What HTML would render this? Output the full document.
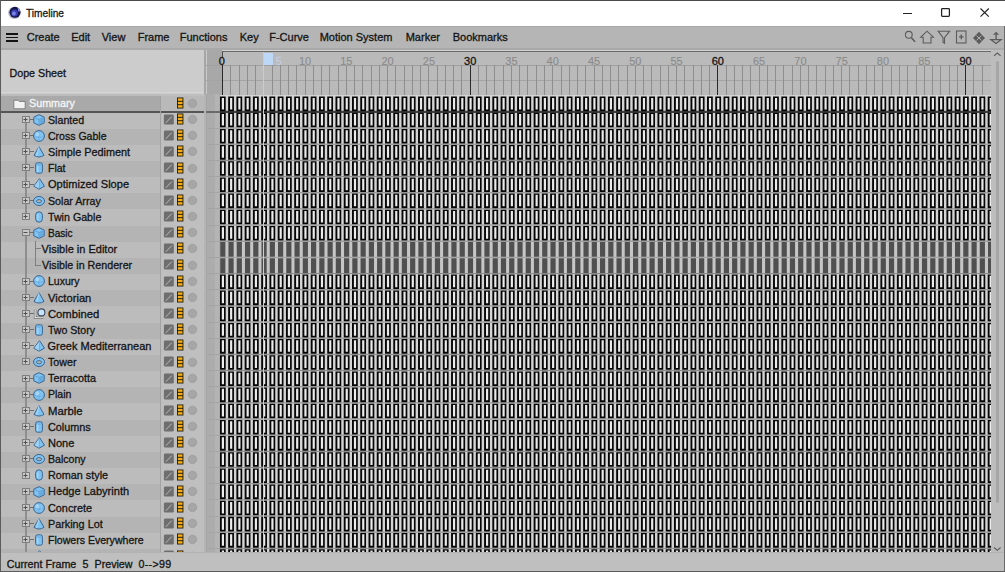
<!DOCTYPE html>
<html><head><meta charset="utf-8"><title>Timeline</title>
<style>
html,body{margin:0;padding:0;}
body{width:1005px;height:572px;overflow:hidden;position:relative;background:#c0c0c0;font-family:"Liberation Sans", sans-serif;}
body>div{position:absolute;}
.t{white-space:pre;line-height:14px;-webkit-text-stroke:0.3px;}
</style></head><body>
<div style="left:0px;top:0px;width:1005px;height:26px;background:#ffffff;"></div><div style="left:0px;top:0px;width:1005px;height:1px;background:#4a4a4a;"></div><svg style="position:absolute;left:8px;top:6px" width="14" height="14" viewBox="0 0 14 14"><circle cx="6.4" cy="6.9" r="6.2" fill="#b8b8c8"/><circle cx="7.0" cy="6.3" r="5.5" fill="#15154e"/><circle cx="6.6" cy="6.9" r="3.4" fill="#3840b0"/><circle cx="5.9" cy="7.5" r="1.9" fill="#7a82ea"/><path d="M9.6 1.6A5.6 5.6 0 0 1 12.2 5.2L10.4 5.6Z" fill="#9aa2f4"/></svg><div class="t" style="left:26px;top:5.89px;font-size:10.7px;color:#1a1a1a;transform:scaleX(0.95);transform-origin:0 0">Timeline</div><div style="left:903px;top:12.5px;width:8.5px;height:1.3px;background:#222;"></div><svg style="position:absolute;left:940px;top:7px" width="11" height="11" viewBox="0 0 11 11"><rect x="1.6" y="1.5" width="7.8" height="7.8" rx="0.8" fill="none" stroke="#222" stroke-width="1.25"/></svg><svg style="position:absolute;left:979px;top:7px" width="11" height="11" viewBox="0 0 11 11"><path d="M1.5 1.5L9.8 9.6M9.8 1.5L1.5 9.6" stroke="#222" stroke-width="1.15"/></svg><div style="left:0px;top:26px;width:1005px;height:22px;background:#b5b5b5;"></div><div style="left:0px;top:26px;width:1005px;height:1.2px;background:#a9a9a9;"></div><div style="left:0px;top:48px;width:1005px;height:2px;background:#a9a9a9;"></div><div style="left:6px;top:33.1px;width:12px;height:1.8px;background:#141414;"></div><div style="left:6px;top:36.5px;width:12px;height:1.8px;background:#141414;"></div><div style="left:6px;top:40.0px;width:12px;height:1.8px;background:#141414;"></div><div class="t" style="left:26.7px;top:30.19px;font-size:11px;color:#141414;">Create</div><div class="t" style="left:71.2px;top:30.19px;font-size:11px;color:#141414;">Edit</div><div class="t" style="left:101.7px;top:30.19px;font-size:11px;color:#141414;">View</div><div class="t" style="left:137.7px;top:30.19px;font-size:11px;color:#141414;">Frame</div><div class="t" style="left:179.7px;top:30.19px;font-size:11px;color:#141414;">Functions</div><div class="t" style="left:239.7px;top:30.19px;font-size:11px;color:#141414;">Key</div><div class="t" style="left:269.2px;top:30.19px;font-size:11px;color:#141414;">F-Curve</div><div class="t" style="left:319.7px;top:30.19px;font-size:11px;color:#141414;">Motion System</div><div class="t" style="left:405.7px;top:30.19px;font-size:11px;color:#141414;">Marker</div><div class="t" style="left:452.7px;top:30.19px;font-size:11px;color:#141414;">Bookmarks</div><svg style="position:absolute;left:900px;top:26px" width="105" height="22" viewBox="0 0 105 22"><g fill="none" stroke="#5c5c5c" stroke-width="1.1">
<circle cx="8.8" cy="8.8" r="3.4"/><path d="M11.3 11.5L15 15.8" stroke-width="1.6"/>
<path d="M20.8 11.2L27 5.2L33.4 11.2H31V17H23.2V11.2Z"/>
<path d="M38.2 5.2H49.6L44.5 11.6V17.2L43 16.2V11.6Z"/>
<rect x="56.5" y="5" width="9.5" height="12"/><path d="M61.3 8.6V13.2M59 10.9H63.6" stroke-width="1.4"/>
</g><g fill="#5c5c5c">
<path d="M79 5.8L85 12L79 18.2L73 12Z"/>
<path d="M96.1 5.8L99.2 8.8H93Z"/><rect x="95.4" y="8.5" width="1.4" height="4.8"/></g>
<path d="M90.8 13.6H101.2L96 17.6Z" fill="none" stroke="#5c5c5c" stroke-width="1.2"/>
<g stroke="#bcbcbc" stroke-width="0.9" fill="none"><path d="M76.6 9.6L81.4 14.4M81.4 9.6L76.6 14.4"/></g></svg><div style="left:1px;top:50px;width:203px;height:44px;background:#cccccc;"></div><div style="left:1px;top:92px;width:203px;height:1px;background:#d5d5d5;"></div><div style="left:1px;top:94px;width:203px;height:1px;background:#8c8c8c;"></div><div style="left:1px;top:95px;width:203px;height:1px;background:#c0c0c0;"></div><div class="t" style="left:9.5px;top:66.09px;font-size:10.7px;color:#141414;">Dope Sheet</div><div style="left:204px;top:50px;width:2px;height:44px;background:#a6a6a6;"></div><div style="left:206px;top:50px;width:1px;height:44px;background:#cacaca;"></div><div style="left:207px;top:50px;width:15px;height:44px;background:#a8a8a8;"></div><div style="left:204px;top:94px;width:2px;height:458px;background:#b4b4b4;"></div><div style="left:206px;top:94px;width:1px;height:458px;background:#a6a6a6;"></div><div style="left:207px;top:94px;width:15px;height:458px;background:#acacac;"></div><div style="left:215px;top:94px;width:4px;height:458px;background:#b4b4b4;"></div><div style="left:222px;top:50px;width:769px;height:45px;background:#bababa;"></div><div style="left:222px;top:50px;width:769px;height:1px;background:#d2d2d2;"></div><div style="left:222px;top:51px;width:769px;height:1px;background:#6a6a6a;"></div><div style="left:206px;top:64.6px;width:785px;height:1.6px;background:#a0a0a0;"></div><div style="left:206px;top:80px;width:785px;height:1px;background:#a4a4a4;"></div><div style="left:222px;top:51px;width:1px;height:6px;background:#505050;"></div><div style="left:222px;top:65px;width:1px;height:30px;background:#484848;"></div><div style="left:222.00px;top:65px;width:1px;height:30px;background:#2a2a2a"></div><div style="left:230.26px;top:65px;width:1px;height:30px;background:#8e8e8e"></div><div style="left:238.51px;top:65px;width:1px;height:30px;background:#8e8e8e"></div><div style="left:246.77px;top:65px;width:1px;height:30px;background:#8e8e8e"></div><div style="left:255.02px;top:65px;width:1px;height:30px;background:#8e8e8e"></div><div style="left:263.28px;top:65px;width:1px;height:30px;background:#8e8e8e"></div><div style="left:271.54px;top:65px;width:1px;height:30px;background:#8e8e8e"></div><div style="left:279.79px;top:65px;width:1px;height:30px;background:#8e8e8e"></div><div style="left:288.05px;top:65px;width:1px;height:30px;background:#8e8e8e"></div><div style="left:296.30px;top:65px;width:1px;height:30px;background:#8e8e8e"></div><div style="left:304.56px;top:65px;width:1px;height:30px;background:#8e8e8e"></div><div style="left:312.82px;top:65px;width:1px;height:30px;background:#8e8e8e"></div><div style="left:321.07px;top:65px;width:1px;height:30px;background:#8e8e8e"></div><div style="left:329.33px;top:65px;width:1px;height:30px;background:#8e8e8e"></div><div style="left:337.58px;top:65px;width:1px;height:30px;background:#8e8e8e"></div><div style="left:345.84px;top:65px;width:1px;height:30px;background:#8e8e8e"></div><div style="left:354.10px;top:65px;width:1px;height:30px;background:#8e8e8e"></div><div style="left:362.35px;top:65px;width:1px;height:30px;background:#8e8e8e"></div><div style="left:370.61px;top:65px;width:1px;height:30px;background:#8e8e8e"></div><div style="left:378.86px;top:65px;width:1px;height:30px;background:#8e8e8e"></div><div style="left:387.12px;top:65px;width:1px;height:30px;background:#8e8e8e"></div><div style="left:395.38px;top:65px;width:1px;height:30px;background:#8e8e8e"></div><div style="left:403.63px;top:65px;width:1px;height:30px;background:#8e8e8e"></div><div style="left:411.89px;top:65px;width:1px;height:30px;background:#8e8e8e"></div><div style="left:420.14px;top:65px;width:1px;height:30px;background:#8e8e8e"></div><div style="left:428.40px;top:65px;width:1px;height:30px;background:#8e8e8e"></div><div style="left:436.66px;top:65px;width:1px;height:30px;background:#8e8e8e"></div><div style="left:444.91px;top:65px;width:1px;height:30px;background:#8e8e8e"></div><div style="left:453.17px;top:65px;width:1px;height:30px;background:#8e8e8e"></div><div style="left:461.42px;top:65px;width:1px;height:30px;background:#8e8e8e"></div><div style="left:469.68px;top:65px;width:1px;height:30px;background:#2a2a2a"></div><div style="left:477.94px;top:65px;width:1px;height:30px;background:#8e8e8e"></div><div style="left:486.19px;top:65px;width:1px;height:30px;background:#8e8e8e"></div><div style="left:494.45px;top:65px;width:1px;height:30px;background:#8e8e8e"></div><div style="left:502.70px;top:65px;width:1px;height:30px;background:#8e8e8e"></div><div style="left:510.96px;top:65px;width:1px;height:30px;background:#8e8e8e"></div><div style="left:519.22px;top:65px;width:1px;height:30px;background:#8e8e8e"></div><div style="left:527.47px;top:65px;width:1px;height:30px;background:#8e8e8e"></div><div style="left:535.73px;top:65px;width:1px;height:30px;background:#8e8e8e"></div><div style="left:543.98px;top:65px;width:1px;height:30px;background:#8e8e8e"></div><div style="left:552.24px;top:65px;width:1px;height:30px;background:#8e8e8e"></div><div style="left:560.50px;top:65px;width:1px;height:30px;background:#8e8e8e"></div><div style="left:568.75px;top:65px;width:1px;height:30px;background:#8e8e8e"></div><div style="left:577.01px;top:65px;width:1px;height:30px;background:#8e8e8e"></div><div style="left:585.26px;top:65px;width:1px;height:30px;background:#8e8e8e"></div><div style="left:593.52px;top:65px;width:1px;height:30px;background:#8e8e8e"></div><div style="left:601.78px;top:65px;width:1px;height:30px;background:#8e8e8e"></div><div style="left:610.03px;top:65px;width:1px;height:30px;background:#8e8e8e"></div><div style="left:618.29px;top:65px;width:1px;height:30px;background:#8e8e8e"></div><div style="left:626.54px;top:65px;width:1px;height:30px;background:#8e8e8e"></div><div style="left:634.80px;top:65px;width:1px;height:30px;background:#8e8e8e"></div><div style="left:643.06px;top:65px;width:1px;height:30px;background:#8e8e8e"></div><div style="left:651.31px;top:65px;width:1px;height:30px;background:#8e8e8e"></div><div style="left:659.57px;top:65px;width:1px;height:30px;background:#8e8e8e"></div><div style="left:667.82px;top:65px;width:1px;height:30px;background:#8e8e8e"></div><div style="left:676.08px;top:65px;width:1px;height:30px;background:#8e8e8e"></div><div style="left:684.34px;top:65px;width:1px;height:30px;background:#8e8e8e"></div><div style="left:692.59px;top:65px;width:1px;height:30px;background:#8e8e8e"></div><div style="left:700.85px;top:65px;width:1px;height:30px;background:#8e8e8e"></div><div style="left:709.10px;top:65px;width:1px;height:30px;background:#8e8e8e"></div><div style="left:717.36px;top:65px;width:1px;height:30px;background:#2a2a2a"></div><div style="left:725.62px;top:65px;width:1px;height:30px;background:#8e8e8e"></div><div style="left:733.87px;top:65px;width:1px;height:30px;background:#8e8e8e"></div><div style="left:742.13px;top:65px;width:1px;height:30px;background:#8e8e8e"></div><div style="left:750.38px;top:65px;width:1px;height:30px;background:#8e8e8e"></div><div style="left:758.64px;top:65px;width:1px;height:30px;background:#8e8e8e"></div><div style="left:766.90px;top:65px;width:1px;height:30px;background:#8e8e8e"></div><div style="left:775.15px;top:65px;width:1px;height:30px;background:#8e8e8e"></div><div style="left:783.41px;top:65px;width:1px;height:30px;background:#8e8e8e"></div><div style="left:791.66px;top:65px;width:1px;height:30px;background:#8e8e8e"></div><div style="left:799.92px;top:65px;width:1px;height:30px;background:#8e8e8e"></div><div style="left:808.18px;top:65px;width:1px;height:30px;background:#8e8e8e"></div><div style="left:816.43px;top:65px;width:1px;height:30px;background:#8e8e8e"></div><div style="left:824.69px;top:65px;width:1px;height:30px;background:#8e8e8e"></div><div style="left:832.94px;top:65px;width:1px;height:30px;background:#8e8e8e"></div><div style="left:841.20px;top:65px;width:1px;height:30px;background:#8e8e8e"></div><div style="left:849.46px;top:65px;width:1px;height:30px;background:#8e8e8e"></div><div style="left:857.71px;top:65px;width:1px;height:30px;background:#8e8e8e"></div><div style="left:865.97px;top:65px;width:1px;height:30px;background:#8e8e8e"></div><div style="left:874.22px;top:65px;width:1px;height:30px;background:#8e8e8e"></div><div style="left:882.48px;top:65px;width:1px;height:30px;background:#8e8e8e"></div><div style="left:890.74px;top:65px;width:1px;height:30px;background:#8e8e8e"></div><div style="left:898.99px;top:65px;width:1px;height:30px;background:#8e8e8e"></div><div style="left:907.25px;top:65px;width:1px;height:30px;background:#8e8e8e"></div><div style="left:915.50px;top:65px;width:1px;height:30px;background:#8e8e8e"></div><div style="left:923.76px;top:65px;width:1px;height:30px;background:#8e8e8e"></div><div style="left:932.02px;top:65px;width:1px;height:30px;background:#8e8e8e"></div><div style="left:940.27px;top:65px;width:1px;height:30px;background:#8e8e8e"></div><div style="left:948.53px;top:65px;width:1px;height:30px;background:#8e8e8e"></div><div style="left:956.78px;top:65px;width:1px;height:30px;background:#8e8e8e"></div><div style="left:965.04px;top:65px;width:1px;height:30px;background:#2a2a2a"></div><div style="left:973.30px;top:65px;width:1px;height:30px;background:#8e8e8e"></div><div style="left:981.55px;top:65px;width:1px;height:30px;background:#8e8e8e"></div><div class="t" style="left:181.80px;width:80px;text-align:center;top:53.99px;font-size:11px;color:#141414;">0</div><div class="t" style="left:275.5px;top:53.99px;font-size:11px;color:#c4cde0;">5</div><div class="t" style="left:265.06px;width:80px;text-align:center;top:53.99px;font-size:11px;color:#8a8a8a;-webkit-text-stroke:0.1px">10</div><div class="t" style="left:306.34px;width:80px;text-align:center;top:53.99px;font-size:11px;color:#8a8a8a;-webkit-text-stroke:0.1px">15</div><div class="t" style="left:347.62px;width:80px;text-align:center;top:53.99px;font-size:11px;color:#8a8a8a;-webkit-text-stroke:0.1px">20</div><div class="t" style="left:388.90px;width:80px;text-align:center;top:53.99px;font-size:11px;color:#8a8a8a;-webkit-text-stroke:0.1px">25</div><div class="t" style="left:430.18px;width:80px;text-align:center;top:53.99px;font-size:11px;color:#141414;">30</div><div class="t" style="left:471.46px;width:80px;text-align:center;top:53.99px;font-size:11px;color:#8a8a8a;-webkit-text-stroke:0.1px">35</div><div class="t" style="left:512.74px;width:80px;text-align:center;top:53.99px;font-size:11px;color:#8a8a8a;-webkit-text-stroke:0.1px">40</div><div class="t" style="left:554.02px;width:80px;text-align:center;top:53.99px;font-size:11px;color:#8a8a8a;-webkit-text-stroke:0.1px">45</div><div class="t" style="left:595.30px;width:80px;text-align:center;top:53.99px;font-size:11px;color:#8a8a8a;-webkit-text-stroke:0.1px">50</div><div class="t" style="left:636.58px;width:80px;text-align:center;top:53.99px;font-size:11px;color:#8a8a8a;-webkit-text-stroke:0.1px">55</div><div class="t" style="left:677.86px;width:80px;text-align:center;top:53.99px;font-size:11px;color:#141414;">60</div><div class="t" style="left:719.14px;width:80px;text-align:center;top:53.99px;font-size:11px;color:#8a8a8a;-webkit-text-stroke:0.1px">65</div><div class="t" style="left:760.42px;width:80px;text-align:center;top:53.99px;font-size:11px;color:#8a8a8a;-webkit-text-stroke:0.1px">70</div><div class="t" style="left:801.70px;width:80px;text-align:center;top:53.99px;font-size:11px;color:#8a8a8a;-webkit-text-stroke:0.1px">75</div><div class="t" style="left:842.98px;width:80px;text-align:center;top:53.99px;font-size:11px;color:#8a8a8a;-webkit-text-stroke:0.1px">80</div><div class="t" style="left:884.26px;width:80px;text-align:center;top:53.99px;font-size:11px;color:#8a8a8a;-webkit-text-stroke:0.1px">85</div><div class="t" style="left:925.54px;width:80px;text-align:center;top:53.99px;font-size:11px;color:#141414;">90</div><div style="left:1px;top:94px;width:203px;height:458px;background:#bcbcbc;"></div><div style="left:161px;top:94px;width:43px;height:458px;background:#bfbfbf;"></div><div style="left:1px;top:96px;width:159px;height:15.7px;background:#a9a9a9;"></div><div style="left:160px;top:96px;width:44px;height:15.7px;background:#b9b9b9;"></div><div style="left:1px;top:128.66px;width:159px;height:16.165px;background:#b4b4b4"></div><div style="left:1px;top:160.99px;width:159px;height:16.165px;background:#b4b4b4"></div><div style="left:1px;top:193.32px;width:159px;height:16.165px;background:#b4b4b4"></div><div style="left:1px;top:225.65px;width:159px;height:16.165px;background:#b4b4b4"></div><div style="left:1px;top:257.98px;width:159px;height:16.165px;background:#b4b4b4"></div><div style="left:1px;top:290.31px;width:159px;height:16.165px;background:#b4b4b4"></div><div style="left:1px;top:322.64px;width:159px;height:16.165px;background:#b4b4b4"></div><div style="left:1px;top:354.97px;width:159px;height:16.165px;background:#b4b4b4"></div><div style="left:1px;top:387.30px;width:159px;height:16.165px;background:#b4b4b4"></div><div style="left:1px;top:419.63px;width:159px;height:16.165px;background:#b4b4b4"></div><div style="left:1px;top:451.96px;width:159px;height:16.165px;background:#b4b4b4"></div><div style="left:1px;top:484.29px;width:159px;height:16.165px;background:#b4b4b4"></div><div style="left:1px;top:516.62px;width:159px;height:16.165px;background:#b4b4b4"></div><div style="left:1px;top:548.95px;width:159px;height:16.165px;background:#b4b4b4"></div><div style="left:207px;top:127.56px;width:13px;height:1px;background:#a4a4a4"></div><div style="left:207px;top:143.72px;width:13px;height:1px;background:#a4a4a4"></div><div style="left:207px;top:159.89px;width:13px;height:1px;background:#a4a4a4"></div><div style="left:207px;top:176.06px;width:13px;height:1px;background:#a4a4a4"></div><div style="left:207px;top:192.22px;width:13px;height:1px;background:#a4a4a4"></div><div style="left:207px;top:208.38px;width:13px;height:1px;background:#a4a4a4"></div><div style="left:207px;top:224.55px;width:13px;height:1px;background:#a4a4a4"></div><div style="left:207px;top:240.71px;width:13px;height:1px;background:#a4a4a4"></div><div style="left:207px;top:256.88px;width:13px;height:1px;background:#a4a4a4"></div><div style="left:207px;top:273.05px;width:13px;height:1px;background:#a4a4a4"></div><div style="left:207px;top:289.21px;width:13px;height:1px;background:#a4a4a4"></div><div style="left:207px;top:305.38px;width:13px;height:1px;background:#a4a4a4"></div><div style="left:207px;top:321.54px;width:13px;height:1px;background:#a4a4a4"></div><div style="left:207px;top:337.70px;width:13px;height:1px;background:#a4a4a4"></div><div style="left:207px;top:353.87px;width:13px;height:1px;background:#a4a4a4"></div><div style="left:207px;top:370.04px;width:13px;height:1px;background:#a4a4a4"></div><div style="left:207px;top:386.20px;width:13px;height:1px;background:#a4a4a4"></div><div style="left:207px;top:402.37px;width:13px;height:1px;background:#a4a4a4"></div><div style="left:207px;top:418.53px;width:13px;height:1px;background:#a4a4a4"></div><div style="left:207px;top:434.69px;width:13px;height:1px;background:#a4a4a4"></div><div style="left:207px;top:450.86px;width:13px;height:1px;background:#a4a4a4"></div><div style="left:207px;top:467.02px;width:13px;height:1px;background:#a4a4a4"></div><div style="left:207px;top:483.19px;width:13px;height:1px;background:#a4a4a4"></div><div style="left:207px;top:499.36px;width:13px;height:1px;background:#a4a4a4"></div><div style="left:207px;top:515.52px;width:13px;height:1px;background:#a4a4a4"></div><div style="left:207px;top:531.68px;width:13px;height:1px;background:#a4a4a4"></div><div style="left:207px;top:547.85px;width:13px;height:1px;background:#a4a4a4"></div><div style="left:1px;top:111.20px;width:203px;height:1.4px;background:#555555"></div><div style="left:206px;top:111.20px;width:16px;height:1.4px;background:#6a6a6a"></div><div style="left:160px;top:96px;width:1px;height:456px;background:#a2a2a2;"></div><svg style="position:absolute;left:13px;top:98.00px" width="13" height="12" viewBox="0 0 13 12"><path d="M0.8 2.2H5L6.2 3.4H12.2V10.8H0.8Z" fill="#f2f2f2" stroke="#777" stroke-width="0.9"/></svg><div class="t" style="left:29px;top:95.92px;font-size:11px;color:#f6f6f6;transform:scaleX(0.976);transform-origin:0 0">Summary</div><svg style="position:absolute;left:176px;top:96.93px" width="22" height="13" viewBox="0 0 22 13"><rect x="1" y="0.5" width="6.4" height="11" fill="#1e1a10"/><rect x="1.9" y="1.4" width="4.6" height="2.4" fill="#f8ae1a"/><rect x="1.9" y="4.8" width="4.6" height="2.4" fill="#f8ae1a"/><rect x="1.9" y="8.2" width="4.6" height="2.4" fill="#f8ae1a"/><circle cx="16.5" cy="6.4" r="4.2" fill="#a6a6a6" stroke="#9c9c9c" stroke-width="0.8"/></svg><div style="left:25.4px;top:123px;width:1.2px;height:9px;background:#8e8e8e"></div><svg style="position:absolute;left:22px;top:116px" width="8" height="7" viewBox="0 0 8 7"><rect x="0.5" y="0.5" width="7" height="6" fill="#c8c8c8" stroke="#808080" stroke-width="1"/><path d="M1.5 3.5H5.5" stroke="#505050" stroke-width="1"/><path d="M3.5 1.5V5.5" stroke="#505050" stroke-width="1"/></svg><div style="left:30px;top:119px;width:4px;height:1px;background:#6e6e6e"></div><svg style="position:absolute;left:33.3px;top:113.80px" width="13" height="12" viewBox="0 0 13 12"><path d="M6 0.7L11.2 3.1V8.9L6 11.3L0.8 8.9V3.1Z" fill="#80c3f1" stroke="#3c6690" stroke-width="1"/><path d="M6 5.6V11.1M6 5.6L1.2 3.4M6 5.6L10.8 3.4" fill="none" stroke="#5d9fd6" stroke-width="0.9"/><path d="M6.5 6L10.6 3.8V8.6L6.5 10.6Z" fill="#5d9fd6" opacity="0.7"/></svg><div class="t" style="left:47.5px;top:112.68px;font-size:11px;color:#141414;transform:scaleX(0.968);transform-origin:0 0">Slanted</div><svg style="position:absolute;left:163px;top:114.00px" width="12" height="12" viewBox="0 0 12 12"><rect x="0.9" y="0.6" width="9.9" height="10" rx="1.4" fill="#6e6e6e"/><path d="M2.8 8.8L8.8 2.6" stroke="#c4c4c4" stroke-width="0.9"/></svg><svg style="position:absolute;left:176px;top:113.10px" width="22" height="13" viewBox="0 0 22 13"><rect x="1" y="0.5" width="6.4" height="11" fill="#1e1a10"/><rect x="1.9" y="1.4" width="4.6" height="2.4" fill="#f8ae1a"/><rect x="1.9" y="4.8" width="4.6" height="2.4" fill="#f8ae1a"/><rect x="1.9" y="8.2" width="4.6" height="2.4" fill="#f8ae1a"/><circle cx="16.5" cy="6.4" r="4.2" fill="#a6a6a6" stroke="#9c9c9c" stroke-width="0.8"/></svg><div style="left:25.4px;top:139px;width:1.2px;height:9px;background:#8e8e8e"></div><svg style="position:absolute;left:22px;top:132px" width="8" height="7" viewBox="0 0 8 7"><rect x="0.5" y="0.5" width="7" height="6" fill="#c8c8c8" stroke="#808080" stroke-width="1"/><path d="M1.5 3.5H5.5" stroke="#505050" stroke-width="1"/><path d="M3.5 1.5V5.5" stroke="#505050" stroke-width="1"/></svg><div style="left:30px;top:135px;width:4px;height:1px;background:#6e6e6e"></div><svg style="position:absolute;left:33.3px;top:129.96px" width="13" height="12" viewBox="0 0 13 12"><circle cx="6" cy="6" r="5.4" fill="#80c3f1" stroke="#3c6690" stroke-width="1"/><path d="M1.2 6.6Q6 8.6 10.8 6.6M6 0.8V11.2" fill="none" stroke="#5d9fd6" stroke-width="0.6" opacity="0.7"/><circle cx="4.4" cy="4.2" r="2" fill="#b2ddfa" opacity="0.7"/></svg><div class="t" style="left:47.5px;top:128.85px;font-size:11px;color:#141414;transform:scaleX(0.957);transform-origin:0 0">Cross Gable</div><svg style="position:absolute;left:163px;top:130.16px" width="12" height="12" viewBox="0 0 12 12"><rect x="0.9" y="0.6" width="9.9" height="10" rx="1.4" fill="#6e6e6e"/><path d="M2.8 8.8L8.8 2.6" stroke="#c4c4c4" stroke-width="0.9"/></svg><svg style="position:absolute;left:176px;top:129.26px" width="22" height="13" viewBox="0 0 22 13"><rect x="1" y="0.5" width="6.4" height="11" fill="#1e1a10"/><rect x="1.9" y="1.4" width="4.6" height="2.4" fill="#f8ae1a"/><rect x="1.9" y="4.8" width="4.6" height="2.4" fill="#f8ae1a"/><rect x="1.9" y="8.2" width="4.6" height="2.4" fill="#f8ae1a"/><circle cx="16.5" cy="6.4" r="4.2" fill="#a6a6a6" stroke="#9c9c9c" stroke-width="0.8"/></svg><div style="left:25.4px;top:155px;width:1.2px;height:9px;background:#8e8e8e"></div><svg style="position:absolute;left:22px;top:148px" width="8" height="7" viewBox="0 0 8 7"><rect x="0.5" y="0.5" width="7" height="6" fill="#c8c8c8" stroke="#808080" stroke-width="1"/><path d="M1.5 3.5H5.5" stroke="#505050" stroke-width="1"/><path d="M3.5 1.5V5.5" stroke="#505050" stroke-width="1"/></svg><div style="left:30px;top:151px;width:4px;height:1px;background:#6e6e6e"></div><svg style="position:absolute;left:33.3px;top:146.12px" width="13" height="12" viewBox="0 0 13 12"><path d="M6 0.6L11 9.4Q6 12.6 1 9.4Z" fill="#80c3f1" stroke="#3c6690" stroke-width="1"/><path d="M6 0.6L3.6 10" stroke="#b2ddfa" stroke-width="1.2" opacity="0.8"/></svg><div class="t" style="left:47.5px;top:145.01px;font-size:11px;color:#141414;transform:scaleX(0.987);transform-origin:0 0">Simple Pediment</div><svg style="position:absolute;left:163px;top:146.32px" width="12" height="12" viewBox="0 0 12 12"><rect x="0.9" y="0.6" width="9.9" height="10" rx="1.4" fill="#6e6e6e"/><path d="M2.8 8.8L8.8 2.6" stroke="#c4c4c4" stroke-width="0.9"/></svg><svg style="position:absolute;left:176px;top:145.42px" width="22" height="13" viewBox="0 0 22 13"><rect x="1" y="0.5" width="6.4" height="11" fill="#1e1a10"/><rect x="1.9" y="1.4" width="4.6" height="2.4" fill="#f8ae1a"/><rect x="1.9" y="4.8" width="4.6" height="2.4" fill="#f8ae1a"/><rect x="1.9" y="8.2" width="4.6" height="2.4" fill="#f8ae1a"/><circle cx="16.5" cy="6.4" r="4.2" fill="#a6a6a6" stroke="#9c9c9c" stroke-width="0.8"/></svg><div style="left:25.4px;top:171px;width:1.2px;height:10px;background:#8e8e8e"></div><svg style="position:absolute;left:22px;top:164px" width="8" height="7" viewBox="0 0 8 7"><rect x="0.5" y="0.5" width="7" height="6" fill="#c8c8c8" stroke="#808080" stroke-width="1"/><path d="M1.5 3.5H5.5" stroke="#505050" stroke-width="1"/><path d="M3.5 1.5V5.5" stroke="#505050" stroke-width="1"/></svg><div style="left:30px;top:167px;width:4px;height:1px;background:#6e6e6e"></div><svg style="position:absolute;left:33.3px;top:162.29px" width="13" height="12" viewBox="0 0 13 12"><rect x="2.6" y="0.8" width="6.8" height="10.4" rx="1.8" fill="#80c3f1" stroke="#3c6690" stroke-width="1"/><path d="M2.8 2.6Q6 4 9.2 2.6" fill="none" stroke="#5d9fd6" stroke-width="0.7"/><rect x="3.8" y="3.6" width="1.6" height="6.4" fill="#b2ddfa" opacity="0.7"/></svg><div class="t" style="left:47.5px;top:161.18px;font-size:11px;color:#141414;transform:scaleX(0.95);transform-origin:0 0">Flat</div><svg style="position:absolute;left:163px;top:162.49px" width="12" height="12" viewBox="0 0 12 12"><rect x="0.9" y="0.6" width="9.9" height="10" rx="1.4" fill="#6e6e6e"/><path d="M2.8 8.8L8.8 2.6" stroke="#c4c4c4" stroke-width="0.9"/></svg><svg style="position:absolute;left:176px;top:161.59px" width="22" height="13" viewBox="0 0 22 13"><rect x="1" y="0.5" width="6.4" height="11" fill="#1e1a10"/><rect x="1.9" y="1.4" width="4.6" height="2.4" fill="#f8ae1a"/><rect x="1.9" y="4.8" width="4.6" height="2.4" fill="#f8ae1a"/><rect x="1.9" y="8.2" width="4.6" height="2.4" fill="#f8ae1a"/><circle cx="16.5" cy="6.4" r="4.2" fill="#a6a6a6" stroke="#9c9c9c" stroke-width="0.8"/></svg><div style="left:25.4px;top:188px;width:1.2px;height:9px;background:#8e8e8e"></div><svg style="position:absolute;left:22px;top:181px" width="8" height="7" viewBox="0 0 8 7"><rect x="0.5" y="0.5" width="7" height="6" fill="#c8c8c8" stroke="#808080" stroke-width="1"/><path d="M1.5 3.5H5.5" stroke="#505050" stroke-width="1"/><path d="M3.5 1.5V5.5" stroke="#505050" stroke-width="1"/></svg><div style="left:30px;top:184px;width:4px;height:1px;background:#6e6e6e"></div><svg style="position:absolute;left:33.3px;top:178.46px" width="13" height="12" viewBox="0 0 13 12"><path d="M6.5 0.6L11.5 8.2L6 11.2L0.8 8.2Z" fill="#80c3f1" stroke="#3c6690" stroke-width="1"/><path d="M6.5 0.6L6 11.2" stroke="#5d9fd6" stroke-width="0.8"/><path d="M6.5 1L1.4 8.1L5.8 10.6Z" fill="#b2ddfa" opacity="0.6"/></svg><div class="t" style="left:47.5px;top:177.34px;font-size:11px;color:#141414;transform:scaleX(1.004);transform-origin:0 0">Optimized Slope</div><svg style="position:absolute;left:163px;top:178.66px" width="12" height="12" viewBox="0 0 12 12"><rect x="0.9" y="0.6" width="9.9" height="10" rx="1.4" fill="#6e6e6e"/><path d="M2.8 8.8L8.8 2.6" stroke="#c4c4c4" stroke-width="0.9"/></svg><svg style="position:absolute;left:176px;top:177.75px" width="22" height="13" viewBox="0 0 22 13"><rect x="1" y="0.5" width="6.4" height="11" fill="#1e1a10"/><rect x="1.9" y="1.4" width="4.6" height="2.4" fill="#f8ae1a"/><rect x="1.9" y="4.8" width="4.6" height="2.4" fill="#f8ae1a"/><rect x="1.9" y="8.2" width="4.6" height="2.4" fill="#f8ae1a"/><circle cx="16.5" cy="6.4" r="4.2" fill="#a6a6a6" stroke="#9c9c9c" stroke-width="0.8"/></svg><div style="left:25.4px;top:204px;width:1.2px;height:9px;background:#8e8e8e"></div><svg style="position:absolute;left:22px;top:197px" width="8" height="7" viewBox="0 0 8 7"><rect x="0.5" y="0.5" width="7" height="6" fill="#c8c8c8" stroke="#808080" stroke-width="1"/><path d="M1.5 3.5H5.5" stroke="#505050" stroke-width="1"/><path d="M3.5 1.5V5.5" stroke="#505050" stroke-width="1"/></svg><div style="left:30px;top:200px;width:4px;height:1px;background:#6e6e6e"></div><svg style="position:absolute;left:33.3px;top:194.62px" width="13" height="12" viewBox="0 0 13 12"><ellipse cx="6" cy="6" rx="5.5" ry="4.5" fill="#80c3f1" stroke="#3c6690" stroke-width="1"/><ellipse cx="6" cy="6.2" rx="2.6" ry="1.6" fill="#b4b4b4" stroke="#3c6690" stroke-width="0.9"/></svg><div class="t" style="left:47.5px;top:193.51px;font-size:11px;color:#141414;transform:scaleX(0.969);transform-origin:0 0">Solar Array</div><svg style="position:absolute;left:163px;top:194.82px" width="12" height="12" viewBox="0 0 12 12"><rect x="0.9" y="0.6" width="9.9" height="10" rx="1.4" fill="#6e6e6e"/><path d="M2.8 8.8L8.8 2.6" stroke="#c4c4c4" stroke-width="0.9"/></svg><svg style="position:absolute;left:176px;top:193.92px" width="22" height="13" viewBox="0 0 22 13"><rect x="1" y="0.5" width="6.4" height="11" fill="#1e1a10"/><rect x="1.9" y="1.4" width="4.6" height="2.4" fill="#f8ae1a"/><rect x="1.9" y="4.8" width="4.6" height="2.4" fill="#f8ae1a"/><rect x="1.9" y="8.2" width="4.6" height="2.4" fill="#f8ae1a"/><circle cx="16.5" cy="6.4" r="4.2" fill="#a6a6a6" stroke="#9c9c9c" stroke-width="0.8"/></svg><svg style="position:absolute;left:22px;top:213px" width="8" height="7" viewBox="0 0 8 7"><rect x="0.5" y="0.5" width="7" height="6" fill="#c8c8c8" stroke="#808080" stroke-width="1"/><path d="M1.5 3.5H5.5" stroke="#505050" stroke-width="1"/><path d="M3.5 1.5V5.5" stroke="#505050" stroke-width="1"/></svg><svg style="position:absolute;left:33.3px;top:210.78px" width="13" height="12" viewBox="0 0 13 12"><rect x="2.6" y="0.8" width="6.8" height="10.4" rx="3.4" fill="#80c3f1" stroke="#3c6690" stroke-width="1"/><rect x="4" y="3" width="1.5" height="6" rx="0.7" fill="#b2ddfa" opacity="0.7"/></svg><div class="t" style="left:47.5px;top:209.67px;font-size:11px;color:#141414;transform:scaleX(0.969);transform-origin:0 0">Twin Gable</div><svg style="position:absolute;left:163px;top:210.98px" width="12" height="12" viewBox="0 0 12 12"><rect x="0.9" y="0.6" width="9.9" height="10" rx="1.4" fill="#6e6e6e"/><path d="M2.8 8.8L8.8 2.6" stroke="#c4c4c4" stroke-width="0.9"/></svg><svg style="position:absolute;left:176px;top:210.08px" width="22" height="13" viewBox="0 0 22 13"><rect x="1" y="0.5" width="6.4" height="11" fill="#1e1a10"/><rect x="1.9" y="1.4" width="4.6" height="2.4" fill="#f8ae1a"/><rect x="1.9" y="4.8" width="4.6" height="2.4" fill="#f8ae1a"/><rect x="1.9" y="8.2" width="4.6" height="2.4" fill="#f8ae1a"/><circle cx="16.5" cy="6.4" r="4.2" fill="#a6a6a6" stroke="#9c9c9c" stroke-width="0.8"/></svg><div style="left:25.4px;top:236px;width:1.2px;height:42px;background:#8e8e8e"></div><svg style="position:absolute;left:22px;top:229px" width="8" height="7" viewBox="0 0 8 7"><rect x="0.5" y="0.5" width="7" height="6" fill="#c8c8c8" stroke="#808080" stroke-width="1"/><path d="M1.5 3.5H5.5" stroke="#505050" stroke-width="1"/></svg><div style="left:30px;top:232px;width:4px;height:1px;background:#6e6e6e"></div><svg style="position:absolute;left:33.3px;top:226.95px" width="13" height="12" viewBox="0 0 13 12"><path d="M6 0.7L11.2 3.1V8.9L6 11.3L0.8 8.9V3.1Z" fill="#80c3f1" stroke="#3c6690" stroke-width="1"/><path d="M6 5.6V11.1M6 5.6L1.2 3.4M6 5.6L10.8 3.4" fill="none" stroke="#5d9fd6" stroke-width="0.9"/><path d="M6.5 6L10.6 3.8V8.6L6.5 10.6Z" fill="#5d9fd6" opacity="0.7"/></svg><div class="t" style="left:47.5px;top:225.84px;font-size:11px;color:#141414;transform:scaleX(0.915);transform-origin:0 0">Basic</div><svg style="position:absolute;left:163px;top:227.15px" width="12" height="12" viewBox="0 0 12 12"><rect x="0.9" y="0.6" width="9.9" height="10" rx="1.4" fill="#6e6e6e"/><path d="M2.8 8.8L8.8 2.6" stroke="#c4c4c4" stroke-width="0.9"/></svg><svg style="position:absolute;left:176px;top:226.25px" width="22" height="13" viewBox="0 0 22 13"><rect x="1" y="0.5" width="6.4" height="11" fill="#1e1a10"/><rect x="1.9" y="1.4" width="4.6" height="2.4" fill="#f8ae1a"/><rect x="1.9" y="4.8" width="4.6" height="2.4" fill="#f8ae1a"/><rect x="1.9" y="8.2" width="4.6" height="2.4" fill="#f8ae1a"/><circle cx="16.5" cy="6.4" r="4.2" fill="#a6a6a6" stroke="#9c9c9c" stroke-width="0.8"/></svg><div class="t" style="left:41.6px;top:242.00px;font-size:11px;color:#141414;transform:scaleX(1.0);transform-origin:0 0">Visible in Editor</div><svg style="position:absolute;left:163px;top:243.31px" width="12" height="12" viewBox="0 0 12 12"><rect x="0.9" y="0.6" width="9.9" height="10" rx="1.4" fill="#6e6e6e"/><path d="M2.8 8.8L8.8 2.6" stroke="#c4c4c4" stroke-width="0.9"/></svg><svg style="position:absolute;left:176px;top:242.41px" width="22" height="13" viewBox="0 0 22 13"><rect x="1" y="0.5" width="6.4" height="11" fill="#1e1a10"/><rect x="1.9" y="1.4" width="4.6" height="2.4" fill="#f8ae1a"/><rect x="1.9" y="4.8" width="4.6" height="2.4" fill="#f8ae1a"/><rect x="1.9" y="8.2" width="4.6" height="2.4" fill="#f8ae1a"/><circle cx="16.5" cy="6.4" r="4.2" fill="#a6a6a6" stroke="#9c9c9c" stroke-width="0.8"/></svg><div class="t" style="left:41.6px;top:258.17px;font-size:11px;color:#141414;transform:scaleX(0.972);transform-origin:0 0">Visible in Renderer</div><svg style="position:absolute;left:163px;top:259.48px" width="12" height="12" viewBox="0 0 12 12"><rect x="0.9" y="0.6" width="9.9" height="10" rx="1.4" fill="#6e6e6e"/><path d="M2.8 8.8L8.8 2.6" stroke="#c4c4c4" stroke-width="0.9"/></svg><svg style="position:absolute;left:176px;top:258.58px" width="22" height="13" viewBox="0 0 22 13"><rect x="1" y="0.5" width="6.4" height="11" fill="#1e1a10"/><rect x="1.9" y="1.4" width="4.6" height="2.4" fill="#f8ae1a"/><rect x="1.9" y="4.8" width="4.6" height="2.4" fill="#f8ae1a"/><rect x="1.9" y="8.2" width="4.6" height="2.4" fill="#f8ae1a"/><circle cx="16.5" cy="6.4" r="4.2" fill="#a6a6a6" stroke="#9c9c9c" stroke-width="0.8"/></svg><div style="left:25.4px;top:285px;width:1.2px;height:9px;background:#8e8e8e"></div><svg style="position:absolute;left:22px;top:278px" width="8" height="7" viewBox="0 0 8 7"><rect x="0.5" y="0.5" width="7" height="6" fill="#c8c8c8" stroke="#808080" stroke-width="1"/><path d="M1.5 3.5H5.5" stroke="#505050" stroke-width="1"/><path d="M3.5 1.5V5.5" stroke="#505050" stroke-width="1"/></svg><div style="left:30px;top:281px;width:4px;height:1px;background:#6e6e6e"></div><svg style="position:absolute;left:33.3px;top:275.44px" width="13" height="12" viewBox="0 0 13 12"><circle cx="6" cy="6" r="5.4" fill="#80c3f1" stroke="#3c6690" stroke-width="1"/><path d="M1.2 6.6Q6 8.6 10.8 6.6M6 0.8V11.2" fill="none" stroke="#5d9fd6" stroke-width="0.6" opacity="0.7"/><circle cx="4.4" cy="4.2" r="2" fill="#b2ddfa" opacity="0.7"/></svg><div class="t" style="left:47.5px;top:274.33px;font-size:11px;color:#141414;transform:scaleX(0.952);transform-origin:0 0">Luxury</div><svg style="position:absolute;left:163px;top:275.65px" width="12" height="12" viewBox="0 0 12 12"><rect x="0.9" y="0.6" width="9.9" height="10" rx="1.4" fill="#6e6e6e"/><path d="M2.8 8.8L8.8 2.6" stroke="#c4c4c4" stroke-width="0.9"/></svg><svg style="position:absolute;left:176px;top:274.75px" width="22" height="13" viewBox="0 0 22 13"><rect x="1" y="0.5" width="6.4" height="11" fill="#1e1a10"/><rect x="1.9" y="1.4" width="4.6" height="2.4" fill="#f8ae1a"/><rect x="1.9" y="4.8" width="4.6" height="2.4" fill="#f8ae1a"/><rect x="1.9" y="8.2" width="4.6" height="2.4" fill="#f8ae1a"/><circle cx="16.5" cy="6.4" r="4.2" fill="#a6a6a6" stroke="#9c9c9c" stroke-width="0.8"/></svg><div style="left:25.4px;top:301px;width:1.2px;height:9px;background:#8e8e8e"></div><svg style="position:absolute;left:22px;top:294px" width="8" height="7" viewBox="0 0 8 7"><rect x="0.5" y="0.5" width="7" height="6" fill="#c8c8c8" stroke="#808080" stroke-width="1"/><path d="M1.5 3.5H5.5" stroke="#505050" stroke-width="1"/><path d="M3.5 1.5V5.5" stroke="#505050" stroke-width="1"/></svg><div style="left:30px;top:297px;width:4px;height:1px;background:#6e6e6e"></div><svg style="position:absolute;left:33.3px;top:291.61px" width="13" height="12" viewBox="0 0 13 12"><path d="M6 0.6L11 9.4Q6 12.6 1 9.4Z" fill="#80c3f1" stroke="#3c6690" stroke-width="1"/><path d="M6 0.6L3.6 10" stroke="#b2ddfa" stroke-width="1.2" opacity="0.8"/></svg><div class="t" style="left:47.5px;top:290.50px;font-size:11px;color:#141414;transform:scaleX(1.017);transform-origin:0 0">Victorian</div><svg style="position:absolute;left:163px;top:291.81px" width="12" height="12" viewBox="0 0 12 12"><rect x="0.9" y="0.6" width="9.9" height="10" rx="1.4" fill="#6e6e6e"/><path d="M2.8 8.8L8.8 2.6" stroke="#c4c4c4" stroke-width="0.9"/></svg><svg style="position:absolute;left:176px;top:290.91px" width="22" height="13" viewBox="0 0 22 13"><rect x="1" y="0.5" width="6.4" height="11" fill="#1e1a10"/><rect x="1.9" y="1.4" width="4.6" height="2.4" fill="#f8ae1a"/><rect x="1.9" y="4.8" width="4.6" height="2.4" fill="#f8ae1a"/><rect x="1.9" y="8.2" width="4.6" height="2.4" fill="#f8ae1a"/><circle cx="16.5" cy="6.4" r="4.2" fill="#a6a6a6" stroke="#9c9c9c" stroke-width="0.8"/></svg><div style="left:25.4px;top:317px;width:1.2px;height:9px;background:#8e8e8e"></div><svg style="position:absolute;left:22px;top:310px" width="8" height="7" viewBox="0 0 8 7"><rect x="0.5" y="0.5" width="7" height="6" fill="#c8c8c8" stroke="#808080" stroke-width="1"/><path d="M1.5 3.5H5.5" stroke="#505050" stroke-width="1"/><path d="M3.5 1.5V5.5" stroke="#505050" stroke-width="1"/></svg><div style="left:30px;top:313px;width:4px;height:1px;background:#6e6e6e"></div><svg style="position:absolute;left:33.3px;top:307.77px" width="13" height="12" viewBox="0 0 13 12"><path d="M2.1 1.6V9.8H10.4" fill="none" stroke="#6a6a6a" stroke-width="2.4"/><path d="M2.1 1.6V9.8H10.4" fill="none" stroke="#f2f2f2" stroke-width="1.1"/><circle cx="8.4" cy="4.4" r="3.5" fill="#c4e4fa" stroke="#404a5c" stroke-width="1.1"/></svg><div class="t" style="left:47.5px;top:306.66px;font-size:11px;color:#141414;transform:scaleX(1.022);transform-origin:0 0">Combined</div><svg style="position:absolute;left:163px;top:307.98px" width="12" height="12" viewBox="0 0 12 12"><rect x="0.9" y="0.6" width="9.9" height="10" rx="1.4" fill="#6e6e6e"/><path d="M2.8 8.8L8.8 2.6" stroke="#c4c4c4" stroke-width="0.9"/></svg><svg style="position:absolute;left:176px;top:307.07px" width="22" height="13" viewBox="0 0 22 13"><rect x="1" y="0.5" width="6.4" height="11" fill="#1e1a10"/><rect x="1.9" y="1.4" width="4.6" height="2.4" fill="#f8ae1a"/><rect x="1.9" y="4.8" width="4.6" height="2.4" fill="#f8ae1a"/><rect x="1.9" y="8.2" width="4.6" height="2.4" fill="#f8ae1a"/><circle cx="16.5" cy="6.4" r="4.2" fill="#a6a6a6" stroke="#9c9c9c" stroke-width="0.8"/></svg><div style="left:25.4px;top:333px;width:1.2px;height:9px;background:#8e8e8e"></div><svg style="position:absolute;left:22px;top:326px" width="8" height="7" viewBox="0 0 8 7"><rect x="0.5" y="0.5" width="7" height="6" fill="#c8c8c8" stroke="#808080" stroke-width="1"/><path d="M1.5 3.5H5.5" stroke="#505050" stroke-width="1"/><path d="M3.5 1.5V5.5" stroke="#505050" stroke-width="1"/></svg><div style="left:30px;top:329px;width:4px;height:1px;background:#6e6e6e"></div><svg style="position:absolute;left:33.3px;top:323.94px" width="13" height="12" viewBox="0 0 13 12"><rect x="2.6" y="0.8" width="6.8" height="10.4" rx="1.8" fill="#80c3f1" stroke="#3c6690" stroke-width="1"/><path d="M2.8 2.6Q6 4 9.2 2.6" fill="none" stroke="#5d9fd6" stroke-width="0.7"/><rect x="3.8" y="3.6" width="1.6" height="6.4" fill="#b2ddfa" opacity="0.7"/></svg><div class="t" style="left:47.5px;top:322.83px;font-size:11px;color:#141414;transform:scaleX(0.961);transform-origin:0 0">Two Story</div><svg style="position:absolute;left:163px;top:324.14px" width="12" height="12" viewBox="0 0 12 12"><rect x="0.9" y="0.6" width="9.9" height="10" rx="1.4" fill="#6e6e6e"/><path d="M2.8 8.8L8.8 2.6" stroke="#c4c4c4" stroke-width="0.9"/></svg><svg style="position:absolute;left:176px;top:323.24px" width="22" height="13" viewBox="0 0 22 13"><rect x="1" y="0.5" width="6.4" height="11" fill="#1e1a10"/><rect x="1.9" y="1.4" width="4.6" height="2.4" fill="#f8ae1a"/><rect x="1.9" y="4.8" width="4.6" height="2.4" fill="#f8ae1a"/><rect x="1.9" y="8.2" width="4.6" height="2.4" fill="#f8ae1a"/><circle cx="16.5" cy="6.4" r="4.2" fill="#a6a6a6" stroke="#9c9c9c" stroke-width="0.8"/></svg><div style="left:25.4px;top:349px;width:1.2px;height:9px;background:#8e8e8e"></div><svg style="position:absolute;left:22px;top:342px" width="8" height="7" viewBox="0 0 8 7"><rect x="0.5" y="0.5" width="7" height="6" fill="#c8c8c8" stroke="#808080" stroke-width="1"/><path d="M1.5 3.5H5.5" stroke="#505050" stroke-width="1"/><path d="M3.5 1.5V5.5" stroke="#505050" stroke-width="1"/></svg><div style="left:30px;top:345px;width:4px;height:1px;background:#6e6e6e"></div><svg style="position:absolute;left:33.3px;top:340.10px" width="13" height="12" viewBox="0 0 13 12"><path d="M6.5 0.6L11.5 8.2L6 11.2L0.8 8.2Z" fill="#80c3f1" stroke="#3c6690" stroke-width="1"/><path d="M6.5 0.6L6 11.2" stroke="#5d9fd6" stroke-width="0.8"/><path d="M6.5 1L1.4 8.1L5.8 10.6Z" fill="#b2ddfa" opacity="0.6"/></svg><div class="t" style="left:47.5px;top:338.99px;font-size:11px;color:#141414;transform:scaleX(1.0);transform-origin:0 0">Greek Mediterranean</div><svg style="position:absolute;left:163px;top:340.31px" width="12" height="12" viewBox="0 0 12 12"><rect x="0.9" y="0.6" width="9.9" height="10" rx="1.4" fill="#6e6e6e"/><path d="M2.8 8.8L8.8 2.6" stroke="#c4c4c4" stroke-width="0.9"/></svg><svg style="position:absolute;left:176px;top:339.40px" width="22" height="13" viewBox="0 0 22 13"><rect x="1" y="0.5" width="6.4" height="11" fill="#1e1a10"/><rect x="1.9" y="1.4" width="4.6" height="2.4" fill="#f8ae1a"/><rect x="1.9" y="4.8" width="4.6" height="2.4" fill="#f8ae1a"/><rect x="1.9" y="8.2" width="4.6" height="2.4" fill="#f8ae1a"/><circle cx="16.5" cy="6.4" r="4.2" fill="#a6a6a6" stroke="#9c9c9c" stroke-width="0.8"/></svg><svg style="position:absolute;left:22px;top:358px" width="8" height="7" viewBox="0 0 8 7"><rect x="0.5" y="0.5" width="7" height="6" fill="#c8c8c8" stroke="#808080" stroke-width="1"/><path d="M1.5 3.5H5.5" stroke="#505050" stroke-width="1"/><path d="M3.5 1.5V5.5" stroke="#505050" stroke-width="1"/></svg><svg style="position:absolute;left:33.3px;top:356.27px" width="13" height="12" viewBox="0 0 13 12"><ellipse cx="6" cy="6" rx="5.5" ry="4.5" fill="#80c3f1" stroke="#3c6690" stroke-width="1"/><ellipse cx="6" cy="6.2" rx="2.6" ry="1.6" fill="#b4b4b4" stroke="#3c6690" stroke-width="0.9"/></svg><div class="t" style="left:47.5px;top:355.16px;font-size:11px;color:#141414;transform:scaleX(0.972);transform-origin:0 0">Tower</div><svg style="position:absolute;left:163px;top:356.47px" width="12" height="12" viewBox="0 0 12 12"><rect x="0.9" y="0.6" width="9.9" height="10" rx="1.4" fill="#6e6e6e"/><path d="M2.8 8.8L8.8 2.6" stroke="#c4c4c4" stroke-width="0.9"/></svg><svg style="position:absolute;left:176px;top:355.57px" width="22" height="13" viewBox="0 0 22 13"><rect x="1" y="0.5" width="6.4" height="11" fill="#1e1a10"/><rect x="1.9" y="1.4" width="4.6" height="2.4" fill="#f8ae1a"/><rect x="1.9" y="4.8" width="4.6" height="2.4" fill="#f8ae1a"/><rect x="1.9" y="8.2" width="4.6" height="2.4" fill="#f8ae1a"/><circle cx="16.5" cy="6.4" r="4.2" fill="#a6a6a6" stroke="#9c9c9c" stroke-width="0.8"/></svg><div style="left:25.4px;top:382px;width:1.2px;height:9px;background:#8e8e8e"></div><svg style="position:absolute;left:22px;top:375px" width="8" height="7" viewBox="0 0 8 7"><rect x="0.5" y="0.5" width="7" height="6" fill="#c8c8c8" stroke="#808080" stroke-width="1"/><path d="M1.5 3.5H5.5" stroke="#505050" stroke-width="1"/><path d="M3.5 1.5V5.5" stroke="#505050" stroke-width="1"/></svg><div style="left:30px;top:378px;width:4px;height:1px;background:#6e6e6e"></div><svg style="position:absolute;left:33.3px;top:372.44px" width="13" height="12" viewBox="0 0 13 12"><path d="M6 0.7L11.2 3.1V8.9L6 11.3L0.8 8.9V3.1Z" fill="#80c3f1" stroke="#3c6690" stroke-width="1"/><path d="M6 5.6V11.1M6 5.6L1.2 3.4M6 5.6L10.8 3.4" fill="none" stroke="#5d9fd6" stroke-width="0.9"/><path d="M6.5 6L10.6 3.8V8.6L6.5 10.6Z" fill="#5d9fd6" opacity="0.7"/></svg><div class="t" style="left:47.5px;top:371.32px;font-size:11px;color:#141414;transform:scaleX(0.98);transform-origin:0 0">Terracotta</div><svg style="position:absolute;left:163px;top:372.64px" width="12" height="12" viewBox="0 0 12 12"><rect x="0.9" y="0.6" width="9.9" height="10" rx="1.4" fill="#6e6e6e"/><path d="M2.8 8.8L8.8 2.6" stroke="#c4c4c4" stroke-width="0.9"/></svg><svg style="position:absolute;left:176px;top:371.74px" width="22" height="13" viewBox="0 0 22 13"><rect x="1" y="0.5" width="6.4" height="11" fill="#1e1a10"/><rect x="1.9" y="1.4" width="4.6" height="2.4" fill="#f8ae1a"/><rect x="1.9" y="4.8" width="4.6" height="2.4" fill="#f8ae1a"/><rect x="1.9" y="8.2" width="4.6" height="2.4" fill="#f8ae1a"/><circle cx="16.5" cy="6.4" r="4.2" fill="#a6a6a6" stroke="#9c9c9c" stroke-width="0.8"/></svg><div style="left:25.4px;top:398px;width:1.2px;height:9px;background:#8e8e8e"></div><svg style="position:absolute;left:22px;top:391px" width="8" height="7" viewBox="0 0 8 7"><rect x="0.5" y="0.5" width="7" height="6" fill="#c8c8c8" stroke="#808080" stroke-width="1"/><path d="M1.5 3.5H5.5" stroke="#505050" stroke-width="1"/><path d="M3.5 1.5V5.5" stroke="#505050" stroke-width="1"/></svg><div style="left:30px;top:394px;width:4px;height:1px;background:#6e6e6e"></div><svg style="position:absolute;left:33.3px;top:388.60px" width="13" height="12" viewBox="0 0 13 12"><circle cx="6" cy="6" r="5.4" fill="#80c3f1" stroke="#3c6690" stroke-width="1"/><path d="M1.2 6.6Q6 8.6 10.8 6.6M6 0.8V11.2" fill="none" stroke="#5d9fd6" stroke-width="0.6" opacity="0.7"/><circle cx="4.4" cy="4.2" r="2" fill="#b2ddfa" opacity="0.7"/></svg><div class="t" style="left:47.5px;top:387.49px;font-size:11px;color:#141414;transform:scaleX(0.958);transform-origin:0 0">Plain</div><svg style="position:absolute;left:163px;top:388.80px" width="12" height="12" viewBox="0 0 12 12"><rect x="0.9" y="0.6" width="9.9" height="10" rx="1.4" fill="#6e6e6e"/><path d="M2.8 8.8L8.8 2.6" stroke="#c4c4c4" stroke-width="0.9"/></svg><svg style="position:absolute;left:176px;top:387.90px" width="22" height="13" viewBox="0 0 22 13"><rect x="1" y="0.5" width="6.4" height="11" fill="#1e1a10"/><rect x="1.9" y="1.4" width="4.6" height="2.4" fill="#f8ae1a"/><rect x="1.9" y="4.8" width="4.6" height="2.4" fill="#f8ae1a"/><rect x="1.9" y="8.2" width="4.6" height="2.4" fill="#f8ae1a"/><circle cx="16.5" cy="6.4" r="4.2" fill="#a6a6a6" stroke="#9c9c9c" stroke-width="0.8"/></svg><div style="left:25.4px;top:414px;width:1.2px;height:9px;background:#8e8e8e"></div><svg style="position:absolute;left:22px;top:407px" width="8" height="7" viewBox="0 0 8 7"><rect x="0.5" y="0.5" width="7" height="6" fill="#c8c8c8" stroke="#808080" stroke-width="1"/><path d="M1.5 3.5H5.5" stroke="#505050" stroke-width="1"/><path d="M3.5 1.5V5.5" stroke="#505050" stroke-width="1"/></svg><div style="left:30px;top:410px;width:4px;height:1px;background:#6e6e6e"></div><svg style="position:absolute;left:33.3px;top:404.76px" width="13" height="12" viewBox="0 0 13 12"><path d="M6 0.6L11 9.4Q6 12.6 1 9.4Z" fill="#80c3f1" stroke="#3c6690" stroke-width="1"/><path d="M6 0.6L3.6 10" stroke="#b2ddfa" stroke-width="1.2" opacity="0.8"/></svg><div class="t" style="left:47.5px;top:403.65px;font-size:11px;color:#141414;transform:scaleX(1.03);transform-origin:0 0">Marble</div><svg style="position:absolute;left:163px;top:404.97px" width="12" height="12" viewBox="0 0 12 12"><rect x="0.9" y="0.6" width="9.9" height="10" rx="1.4" fill="#6e6e6e"/><path d="M2.8 8.8L8.8 2.6" stroke="#c4c4c4" stroke-width="0.9"/></svg><svg style="position:absolute;left:176px;top:404.06px" width="22" height="13" viewBox="0 0 22 13"><rect x="1" y="0.5" width="6.4" height="11" fill="#1e1a10"/><rect x="1.9" y="1.4" width="4.6" height="2.4" fill="#f8ae1a"/><rect x="1.9" y="4.8" width="4.6" height="2.4" fill="#f8ae1a"/><rect x="1.9" y="8.2" width="4.6" height="2.4" fill="#f8ae1a"/><circle cx="16.5" cy="6.4" r="4.2" fill="#a6a6a6" stroke="#9c9c9c" stroke-width="0.8"/></svg><div style="left:25.4px;top:430px;width:1.2px;height:9px;background:#8e8e8e"></div><svg style="position:absolute;left:22px;top:423px" width="8" height="7" viewBox="0 0 8 7"><rect x="0.5" y="0.5" width="7" height="6" fill="#c8c8c8" stroke="#808080" stroke-width="1"/><path d="M1.5 3.5H5.5" stroke="#505050" stroke-width="1"/><path d="M3.5 1.5V5.5" stroke="#505050" stroke-width="1"/></svg><div style="left:30px;top:426px;width:4px;height:1px;background:#6e6e6e"></div><svg style="position:absolute;left:33.3px;top:420.93px" width="13" height="12" viewBox="0 0 13 12"><rect x="2.6" y="0.8" width="6.8" height="10.4" rx="1.8" fill="#80c3f1" stroke="#3c6690" stroke-width="1"/><path d="M2.8 2.6Q6 4 9.2 2.6" fill="none" stroke="#5d9fd6" stroke-width="0.7"/><rect x="3.8" y="3.6" width="1.6" height="6.4" fill="#b2ddfa" opacity="0.7"/></svg><div class="t" style="left:47.5px;top:419.82px;font-size:11px;color:#141414;transform:scaleX(0.986);transform-origin:0 0">Columns</div><svg style="position:absolute;left:163px;top:421.13px" width="12" height="12" viewBox="0 0 12 12"><rect x="0.9" y="0.6" width="9.9" height="10" rx="1.4" fill="#6e6e6e"/><path d="M2.8 8.8L8.8 2.6" stroke="#c4c4c4" stroke-width="0.9"/></svg><svg style="position:absolute;left:176px;top:420.23px" width="22" height="13" viewBox="0 0 22 13"><rect x="1" y="0.5" width="6.4" height="11" fill="#1e1a10"/><rect x="1.9" y="1.4" width="4.6" height="2.4" fill="#f8ae1a"/><rect x="1.9" y="4.8" width="4.6" height="2.4" fill="#f8ae1a"/><rect x="1.9" y="8.2" width="4.6" height="2.4" fill="#f8ae1a"/><circle cx="16.5" cy="6.4" r="4.2" fill="#a6a6a6" stroke="#9c9c9c" stroke-width="0.8"/></svg><div style="left:25.4px;top:446px;width:1.2px;height:9px;background:#8e8e8e"></div><svg style="position:absolute;left:22px;top:439px" width="8" height="7" viewBox="0 0 8 7"><rect x="0.5" y="0.5" width="7" height="6" fill="#c8c8c8" stroke="#808080" stroke-width="1"/><path d="M1.5 3.5H5.5" stroke="#505050" stroke-width="1"/><path d="M3.5 1.5V5.5" stroke="#505050" stroke-width="1"/></svg><div style="left:30px;top:442px;width:4px;height:1px;background:#6e6e6e"></div><svg style="position:absolute;left:33.3px;top:437.09px" width="13" height="12" viewBox="0 0 13 12"><path d="M6.5 0.6L11.5 8.2L6 11.2L0.8 8.2Z" fill="#80c3f1" stroke="#3c6690" stroke-width="1"/><path d="M6.5 0.6L6 11.2" stroke="#5d9fd6" stroke-width="0.8"/><path d="M6.5 1L1.4 8.1L5.8 10.6Z" fill="#b2ddfa" opacity="0.6"/></svg><div class="t" style="left:47.5px;top:435.98px;font-size:11px;color:#141414;transform:scaleX(1.004);transform-origin:0 0">None</div><svg style="position:absolute;left:163px;top:437.30px" width="12" height="12" viewBox="0 0 12 12"><rect x="0.9" y="0.6" width="9.9" height="10" rx="1.4" fill="#6e6e6e"/><path d="M2.8 8.8L8.8 2.6" stroke="#c4c4c4" stroke-width="0.9"/></svg><svg style="position:absolute;left:176px;top:436.39px" width="22" height="13" viewBox="0 0 22 13"><rect x="1" y="0.5" width="6.4" height="11" fill="#1e1a10"/><rect x="1.9" y="1.4" width="4.6" height="2.4" fill="#f8ae1a"/><rect x="1.9" y="4.8" width="4.6" height="2.4" fill="#f8ae1a"/><rect x="1.9" y="8.2" width="4.6" height="2.4" fill="#f8ae1a"/><circle cx="16.5" cy="6.4" r="4.2" fill="#a6a6a6" stroke="#9c9c9c" stroke-width="0.8"/></svg><div style="left:25.4px;top:462px;width:1.2px;height:10px;background:#8e8e8e"></div><svg style="position:absolute;left:22px;top:455px" width="8" height="7" viewBox="0 0 8 7"><rect x="0.5" y="0.5" width="7" height="6" fill="#c8c8c8" stroke="#808080" stroke-width="1"/><path d="M1.5 3.5H5.5" stroke="#505050" stroke-width="1"/><path d="M3.5 1.5V5.5" stroke="#505050" stroke-width="1"/></svg><div style="left:30px;top:458px;width:4px;height:1px;background:#6e6e6e"></div><svg style="position:absolute;left:33.3px;top:453.26px" width="13" height="12" viewBox="0 0 13 12"><ellipse cx="6" cy="6" rx="5.5" ry="4.5" fill="#80c3f1" stroke="#3c6690" stroke-width="1"/><ellipse cx="6" cy="6.2" rx="2.6" ry="1.6" fill="#b4b4b4" stroke="#3c6690" stroke-width="0.9"/></svg><div class="t" style="left:47.5px;top:452.15px;font-size:11px;color:#141414;transform:scaleX(0.962);transform-origin:0 0">Balcony</div><svg style="position:absolute;left:163px;top:453.46px" width="12" height="12" viewBox="0 0 12 12"><rect x="0.9" y="0.6" width="9.9" height="10" rx="1.4" fill="#6e6e6e"/><path d="M2.8 8.8L8.8 2.6" stroke="#c4c4c4" stroke-width="0.9"/></svg><svg style="position:absolute;left:176px;top:452.56px" width="22" height="13" viewBox="0 0 22 13"><rect x="1" y="0.5" width="6.4" height="11" fill="#1e1a10"/><rect x="1.9" y="1.4" width="4.6" height="2.4" fill="#f8ae1a"/><rect x="1.9" y="4.8" width="4.6" height="2.4" fill="#f8ae1a"/><rect x="1.9" y="8.2" width="4.6" height="2.4" fill="#f8ae1a"/><circle cx="16.5" cy="6.4" r="4.2" fill="#a6a6a6" stroke="#9c9c9c" stroke-width="0.8"/></svg><svg style="position:absolute;left:22px;top:472px" width="8" height="7" viewBox="0 0 8 7"><rect x="0.5" y="0.5" width="7" height="6" fill="#c8c8c8" stroke="#808080" stroke-width="1"/><path d="M1.5 3.5H5.5" stroke="#505050" stroke-width="1"/><path d="M3.5 1.5V5.5" stroke="#505050" stroke-width="1"/></svg><svg style="position:absolute;left:33.3px;top:469.42px" width="13" height="12" viewBox="0 0 13 12"><rect x="2.6" y="0.8" width="6.8" height="10.4" rx="3.4" fill="#80c3f1" stroke="#3c6690" stroke-width="1"/><rect x="4" y="3" width="1.5" height="6" rx="0.7" fill="#b2ddfa" opacity="0.7"/></svg><div class="t" style="left:47.5px;top:468.31px;font-size:11px;color:#141414;transform:scaleX(0.982);transform-origin:0 0">Roman style</div><svg style="position:absolute;left:163px;top:469.62px" width="12" height="12" viewBox="0 0 12 12"><rect x="0.9" y="0.6" width="9.9" height="10" rx="1.4" fill="#6e6e6e"/><path d="M2.8 8.8L8.8 2.6" stroke="#c4c4c4" stroke-width="0.9"/></svg><svg style="position:absolute;left:176px;top:468.72px" width="22" height="13" viewBox="0 0 22 13"><rect x="1" y="0.5" width="6.4" height="11" fill="#1e1a10"/><rect x="1.9" y="1.4" width="4.6" height="2.4" fill="#f8ae1a"/><rect x="1.9" y="4.8" width="4.6" height="2.4" fill="#f8ae1a"/><rect x="1.9" y="8.2" width="4.6" height="2.4" fill="#f8ae1a"/><circle cx="16.5" cy="6.4" r="4.2" fill="#a6a6a6" stroke="#9c9c9c" stroke-width="0.8"/></svg><div style="left:25.4px;top:495px;width:1.2px;height:9px;background:#8e8e8e"></div><svg style="position:absolute;left:22px;top:488px" width="8" height="7" viewBox="0 0 8 7"><rect x="0.5" y="0.5" width="7" height="6" fill="#c8c8c8" stroke="#808080" stroke-width="1"/><path d="M1.5 3.5H5.5" stroke="#505050" stroke-width="1"/><path d="M3.5 1.5V5.5" stroke="#505050" stroke-width="1"/></svg><div style="left:30px;top:491px;width:4px;height:1px;background:#6e6e6e"></div><svg style="position:absolute;left:33.3px;top:485.59px" width="13" height="12" viewBox="0 0 13 12"><path d="M6 0.7L11.2 3.1V8.9L6 11.3L0.8 8.9V3.1Z" fill="#80c3f1" stroke="#3c6690" stroke-width="1"/><path d="M6 5.6V11.1M6 5.6L1.2 3.4M6 5.6L10.8 3.4" fill="none" stroke="#5d9fd6" stroke-width="0.9"/><path d="M6.5 6L10.6 3.8V8.6L6.5 10.6Z" fill="#5d9fd6" opacity="0.7"/></svg><div class="t" style="left:47.5px;top:484.48px;font-size:11px;color:#141414;transform:scaleX(1.005);transform-origin:0 0">Hedge Labyrinth</div><svg style="position:absolute;left:163px;top:485.79px" width="12" height="12" viewBox="0 0 12 12"><rect x="0.9" y="0.6" width="9.9" height="10" rx="1.4" fill="#6e6e6e"/><path d="M2.8 8.8L8.8 2.6" stroke="#c4c4c4" stroke-width="0.9"/></svg><svg style="position:absolute;left:176px;top:484.89px" width="22" height="13" viewBox="0 0 22 13"><rect x="1" y="0.5" width="6.4" height="11" fill="#1e1a10"/><rect x="1.9" y="1.4" width="4.6" height="2.4" fill="#f8ae1a"/><rect x="1.9" y="4.8" width="4.6" height="2.4" fill="#f8ae1a"/><rect x="1.9" y="8.2" width="4.6" height="2.4" fill="#f8ae1a"/><circle cx="16.5" cy="6.4" r="4.2" fill="#a6a6a6" stroke="#9c9c9c" stroke-width="0.8"/></svg><div style="left:25.4px;top:511px;width:1.2px;height:9px;background:#8e8e8e"></div><svg style="position:absolute;left:22px;top:504px" width="8" height="7" viewBox="0 0 8 7"><rect x="0.5" y="0.5" width="7" height="6" fill="#c8c8c8" stroke="#808080" stroke-width="1"/><path d="M1.5 3.5H5.5" stroke="#505050" stroke-width="1"/><path d="M3.5 1.5V5.5" stroke="#505050" stroke-width="1"/></svg><div style="left:30px;top:507px;width:4px;height:1px;background:#6e6e6e"></div><svg style="position:absolute;left:33.3px;top:501.75px" width="13" height="12" viewBox="0 0 13 12"><circle cx="6" cy="6" r="5.4" fill="#80c3f1" stroke="#3c6690" stroke-width="1"/><path d="M1.2 6.6Q6 8.6 10.8 6.6M6 0.8V11.2" fill="none" stroke="#5d9fd6" stroke-width="0.6" opacity="0.7"/><circle cx="4.4" cy="4.2" r="2" fill="#b2ddfa" opacity="0.7"/></svg><div class="t" style="left:47.5px;top:500.64px;font-size:11px;color:#141414;transform:scaleX(0.986);transform-origin:0 0">Concrete</div><svg style="position:absolute;left:163px;top:501.96px" width="12" height="12" viewBox="0 0 12 12"><rect x="0.9" y="0.6" width="9.9" height="10" rx="1.4" fill="#6e6e6e"/><path d="M2.8 8.8L8.8 2.6" stroke="#c4c4c4" stroke-width="0.9"/></svg><svg style="position:absolute;left:176px;top:501.06px" width="22" height="13" viewBox="0 0 22 13"><rect x="1" y="0.5" width="6.4" height="11" fill="#1e1a10"/><rect x="1.9" y="1.4" width="4.6" height="2.4" fill="#f8ae1a"/><rect x="1.9" y="4.8" width="4.6" height="2.4" fill="#f8ae1a"/><rect x="1.9" y="8.2" width="4.6" height="2.4" fill="#f8ae1a"/><circle cx="16.5" cy="6.4" r="4.2" fill="#a6a6a6" stroke="#9c9c9c" stroke-width="0.8"/></svg><div style="left:25.4px;top:527px;width:1.2px;height:9px;background:#8e8e8e"></div><svg style="position:absolute;left:22px;top:520px" width="8" height="7" viewBox="0 0 8 7"><rect x="0.5" y="0.5" width="7" height="6" fill="#c8c8c8" stroke="#808080" stroke-width="1"/><path d="M1.5 3.5H5.5" stroke="#505050" stroke-width="1"/><path d="M3.5 1.5V5.5" stroke="#505050" stroke-width="1"/></svg><div style="left:30px;top:523px;width:4px;height:1px;background:#6e6e6e"></div><svg style="position:absolute;left:33.3px;top:517.92px" width="13" height="12" viewBox="0 0 13 12"><path d="M6 0.6L11 9.4Q6 12.6 1 9.4Z" fill="#80c3f1" stroke="#3c6690" stroke-width="1"/><path d="M6 0.6L3.6 10" stroke="#b2ddfa" stroke-width="1.2" opacity="0.8"/></svg><div class="t" style="left:47.5px;top:516.81px;font-size:11px;color:#141414;transform:scaleX(0.982);transform-origin:0 0">Parking Lot</div><svg style="position:absolute;left:163px;top:518.12px" width="12" height="12" viewBox="0 0 12 12"><rect x="0.9" y="0.6" width="9.9" height="10" rx="1.4" fill="#6e6e6e"/><path d="M2.8 8.8L8.8 2.6" stroke="#c4c4c4" stroke-width="0.9"/></svg><svg style="position:absolute;left:176px;top:517.22px" width="22" height="13" viewBox="0 0 22 13"><rect x="1" y="0.5" width="6.4" height="11" fill="#1e1a10"/><rect x="1.9" y="1.4" width="4.6" height="2.4" fill="#f8ae1a"/><rect x="1.9" y="4.8" width="4.6" height="2.4" fill="#f8ae1a"/><rect x="1.9" y="8.2" width="4.6" height="2.4" fill="#f8ae1a"/><circle cx="16.5" cy="6.4" r="4.2" fill="#a6a6a6" stroke="#9c9c9c" stroke-width="0.8"/></svg><div style="left:25.4px;top:543px;width:1.2px;height:9px;background:#8e8e8e"></div><svg style="position:absolute;left:22px;top:536px" width="8" height="7" viewBox="0 0 8 7"><rect x="0.5" y="0.5" width="7" height="6" fill="#c8c8c8" stroke="#808080" stroke-width="1"/><path d="M1.5 3.5H5.5" stroke="#505050" stroke-width="1"/><path d="M3.5 1.5V5.5" stroke="#505050" stroke-width="1"/></svg><div style="left:30px;top:539px;width:4px;height:1px;background:#6e6e6e"></div><svg style="position:absolute;left:33.3px;top:534.08px" width="13" height="12" viewBox="0 0 13 12"><rect x="2.6" y="0.8" width="6.8" height="10.4" rx="1.8" fill="#80c3f1" stroke="#3c6690" stroke-width="1"/><path d="M2.8 2.6Q6 4 9.2 2.6" fill="none" stroke="#5d9fd6" stroke-width="0.7"/><rect x="3.8" y="3.6" width="1.6" height="6.4" fill="#b2ddfa" opacity="0.7"/></svg><div class="t" style="left:47.5px;top:532.97px;font-size:11px;color:#141414;transform:scaleX(0.96);transform-origin:0 0">Flowers Everywhere</div><svg style="position:absolute;left:163px;top:534.28px" width="12" height="12" viewBox="0 0 12 12"><rect x="0.9" y="0.6" width="9.9" height="10" rx="1.4" fill="#6e6e6e"/><path d="M2.8 8.8L8.8 2.6" stroke="#c4c4c4" stroke-width="0.9"/></svg><svg style="position:absolute;left:176px;top:533.38px" width="22" height="13" viewBox="0 0 22 13"><rect x="1" y="0.5" width="6.4" height="11" fill="#1e1a10"/><rect x="1.9" y="1.4" width="4.6" height="2.4" fill="#f8ae1a"/><rect x="1.9" y="4.8" width="4.6" height="2.4" fill="#f8ae1a"/><rect x="1.9" y="8.2" width="4.6" height="2.4" fill="#f8ae1a"/><circle cx="16.5" cy="6.4" r="4.2" fill="#a6a6a6" stroke="#9c9c9c" stroke-width="0.8"/></svg><svg style="position:absolute;left:22px;top:552px" width="8" height="7" viewBox="0 0 8 7"><rect x="0.5" y="0.5" width="7" height="6" fill="#c8c8c8" stroke="#808080" stroke-width="1"/><path d="M1.5 3.5H5.5" stroke="#505050" stroke-width="1"/><path d="M3.5 1.5V5.5" stroke="#505050" stroke-width="1"/></svg><div style="left:30px;top:555px;width:4px;height:1px;background:#6e6e6e"></div><svg style="position:absolute;left:33.3px;top:550.25px" width="13" height="12" viewBox="0 0 13 12"><path d="M6.5 0.6L11.5 8.2L6 11.2L0.8 8.2Z" fill="#80c3f1" stroke="#3c6690" stroke-width="1"/><path d="M6.5 0.6L6 11.2" stroke="#5d9fd6" stroke-width="0.8"/><path d="M6.5 1L1.4 8.1L5.8 10.6Z" fill="#b2ddfa" opacity="0.6"/></svg><svg style="position:absolute;left:163px;top:550.45px" width="12" height="12" viewBox="0 0 12 12"><rect x="0.9" y="0.6" width="9.9" height="10" rx="1.4" fill="#6e6e6e"/><path d="M2.8 8.8L8.8 2.6" stroke="#c4c4c4" stroke-width="0.9"/></svg><svg style="position:absolute;left:176px;top:549.55px" width="22" height="13" viewBox="0 0 22 13"><rect x="1" y="0.5" width="6.4" height="11" fill="#1e1a10"/><rect x="1.9" y="1.4" width="4.6" height="2.4" fill="#f8ae1a"/><rect x="1.9" y="4.8" width="4.6" height="2.4" fill="#f8ae1a"/><rect x="1.9" y="8.2" width="4.6" height="2.4" fill="#f8ae1a"/><circle cx="16.5" cy="6.4" r="4.2" fill="#a6a6a6" stroke="#9c9c9c" stroke-width="0.8"/></svg><div style="left:35.2px;top:241px;width:1.1px;height:24.5px;background:#7e7e7e"></div><div style="left:35.2px;top:248px;width:6.3px;height:1.1px;background:#7e7e7e"></div><div style="left:35.2px;top:264.5px;width:6.3px;height:1.1px;background:#7e7e7e"></div><svg style="position:absolute;left:220px;top:95px" width="771" height="457">
<defs><path id="kb" d="M-0.10 0h5.8v14.6h-5.8zM8.16 0h5.8v14.6h-5.8zM16.41 0h5.8v14.6h-5.8zM24.67 0h5.8v14.6h-5.8zM32.92 0h5.8v14.6h-5.8zM41.18 0h5.8v14.6h-5.8zM49.44 0h5.8v14.6h-5.8zM57.69 0h5.8v14.6h-5.8zM65.95 0h5.8v14.6h-5.8zM74.20 0h5.8v14.6h-5.8zM82.46 0h5.8v14.6h-5.8zM90.72 0h5.8v14.6h-5.8zM98.97 0h5.8v14.6h-5.8zM107.23 0h5.8v14.6h-5.8zM115.48 0h5.8v14.6h-5.8zM123.74 0h5.8v14.6h-5.8zM132.00 0h5.8v14.6h-5.8zM140.25 0h5.8v14.6h-5.8zM148.51 0h5.8v14.6h-5.8zM156.76 0h5.8v14.6h-5.8zM165.02 0h5.8v14.6h-5.8zM173.28 0h5.8v14.6h-5.8zM181.53 0h5.8v14.6h-5.8zM189.79 0h5.8v14.6h-5.8zM198.04 0h5.8v14.6h-5.8zM206.30 0h5.8v14.6h-5.8zM214.56 0h5.8v14.6h-5.8zM222.81 0h5.8v14.6h-5.8zM231.07 0h5.8v14.6h-5.8zM239.32 0h5.8v14.6h-5.8zM247.58 0h5.8v14.6h-5.8zM255.84 0h5.8v14.6h-5.8zM264.09 0h5.8v14.6h-5.8zM272.35 0h5.8v14.6h-5.8zM280.60 0h5.8v14.6h-5.8zM288.86 0h5.8v14.6h-5.8zM297.12 0h5.8v14.6h-5.8zM305.37 0h5.8v14.6h-5.8zM313.63 0h5.8v14.6h-5.8zM321.88 0h5.8v14.6h-5.8zM330.14 0h5.8v14.6h-5.8zM338.40 0h5.8v14.6h-5.8zM346.65 0h5.8v14.6h-5.8zM354.91 0h5.8v14.6h-5.8zM363.16 0h5.8v14.6h-5.8zM371.42 0h5.8v14.6h-5.8zM379.68 0h5.8v14.6h-5.8zM387.93 0h5.8v14.6h-5.8zM396.19 0h5.8v14.6h-5.8zM404.44 0h5.8v14.6h-5.8zM412.70 0h5.8v14.6h-5.8zM420.96 0h5.8v14.6h-5.8zM429.21 0h5.8v14.6h-5.8zM437.47 0h5.8v14.6h-5.8zM445.72 0h5.8v14.6h-5.8zM453.98 0h5.8v14.6h-5.8zM462.24 0h5.8v14.6h-5.8zM470.49 0h5.8v14.6h-5.8zM478.75 0h5.8v14.6h-5.8zM487.00 0h5.8v14.6h-5.8zM495.26 0h5.8v14.6h-5.8zM503.52 0h5.8v14.6h-5.8zM511.77 0h5.8v14.6h-5.8zM520.03 0h5.8v14.6h-5.8zM528.28 0h5.8v14.6h-5.8zM536.54 0h5.8v14.6h-5.8zM544.80 0h5.8v14.6h-5.8zM553.05 0h5.8v14.6h-5.8zM561.31 0h5.8v14.6h-5.8zM569.56 0h5.8v14.6h-5.8zM577.82 0h5.8v14.6h-5.8zM586.08 0h5.8v14.6h-5.8zM594.33 0h5.8v14.6h-5.8zM602.59 0h5.8v14.6h-5.8zM610.84 0h5.8v14.6h-5.8zM619.10 0h5.8v14.6h-5.8zM627.36 0h5.8v14.6h-5.8zM635.61 0h5.8v14.6h-5.8zM643.87 0h5.8v14.6h-5.8zM652.12 0h5.8v14.6h-5.8zM660.38 0h5.8v14.6h-5.8zM668.64 0h5.8v14.6h-5.8zM676.89 0h5.8v14.6h-5.8zM685.15 0h5.8v14.6h-5.8zM693.40 0h5.8v14.6h-5.8zM701.66 0h5.8v14.6h-5.8zM709.92 0h5.8v14.6h-5.8zM718.17 0h5.8v14.6h-5.8zM726.43 0h5.8v14.6h-5.8zM734.68 0h5.8v14.6h-5.8zM742.94 0h5.8v14.6h-5.8zM751.20 0h5.8v14.6h-5.8zM759.45 0h5.8v14.6h-5.8zM767.71 0h5.8v14.6h-5.8z"/><path id="kg" d="M0.20 0h5.2v14.8h-5.2zM8.46 0h5.2v14.8h-5.2zM16.71 0h5.2v14.8h-5.2zM24.97 0h5.2v14.8h-5.2zM33.22 0h5.2v14.8h-5.2zM41.48 0h5.2v14.8h-5.2zM49.74 0h5.2v14.8h-5.2zM57.99 0h5.2v14.8h-5.2zM66.25 0h5.2v14.8h-5.2zM74.50 0h5.2v14.8h-5.2zM82.76 0h5.2v14.8h-5.2zM91.02 0h5.2v14.8h-5.2zM99.27 0h5.2v14.8h-5.2zM107.53 0h5.2v14.8h-5.2zM115.78 0h5.2v14.8h-5.2zM124.04 0h5.2v14.8h-5.2zM132.30 0h5.2v14.8h-5.2zM140.55 0h5.2v14.8h-5.2zM148.81 0h5.2v14.8h-5.2zM157.06 0h5.2v14.8h-5.2zM165.32 0h5.2v14.8h-5.2zM173.58 0h5.2v14.8h-5.2zM181.83 0h5.2v14.8h-5.2zM190.09 0h5.2v14.8h-5.2zM198.34 0h5.2v14.8h-5.2zM206.60 0h5.2v14.8h-5.2zM214.86 0h5.2v14.8h-5.2zM223.11 0h5.2v14.8h-5.2zM231.37 0h5.2v14.8h-5.2zM239.62 0h5.2v14.8h-5.2zM247.88 0h5.2v14.8h-5.2zM256.14 0h5.2v14.8h-5.2zM264.39 0h5.2v14.8h-5.2zM272.65 0h5.2v14.8h-5.2zM280.90 0h5.2v14.8h-5.2zM289.16 0h5.2v14.8h-5.2zM297.42 0h5.2v14.8h-5.2zM305.67 0h5.2v14.8h-5.2zM313.93 0h5.2v14.8h-5.2zM322.18 0h5.2v14.8h-5.2zM330.44 0h5.2v14.8h-5.2zM338.70 0h5.2v14.8h-5.2zM346.95 0h5.2v14.8h-5.2zM355.21 0h5.2v14.8h-5.2zM363.46 0h5.2v14.8h-5.2zM371.72 0h5.2v14.8h-5.2zM379.98 0h5.2v14.8h-5.2zM388.23 0h5.2v14.8h-5.2zM396.49 0h5.2v14.8h-5.2zM404.74 0h5.2v14.8h-5.2zM413.00 0h5.2v14.8h-5.2zM421.26 0h5.2v14.8h-5.2zM429.51 0h5.2v14.8h-5.2zM437.77 0h5.2v14.8h-5.2zM446.02 0h5.2v14.8h-5.2zM454.28 0h5.2v14.8h-5.2zM462.54 0h5.2v14.8h-5.2zM470.79 0h5.2v14.8h-5.2zM479.05 0h5.2v14.8h-5.2zM487.30 0h5.2v14.8h-5.2zM495.56 0h5.2v14.8h-5.2zM503.82 0h5.2v14.8h-5.2zM512.07 0h5.2v14.8h-5.2zM520.33 0h5.2v14.8h-5.2zM528.58 0h5.2v14.8h-5.2zM536.84 0h5.2v14.8h-5.2zM545.10 0h5.2v14.8h-5.2zM553.35 0h5.2v14.8h-5.2zM561.61 0h5.2v14.8h-5.2zM569.86 0h5.2v14.8h-5.2zM578.12 0h5.2v14.8h-5.2zM586.38 0h5.2v14.8h-5.2zM594.63 0h5.2v14.8h-5.2zM602.89 0h5.2v14.8h-5.2zM611.14 0h5.2v14.8h-5.2zM619.40 0h5.2v14.8h-5.2zM627.66 0h5.2v14.8h-5.2zM635.91 0h5.2v14.8h-5.2zM644.17 0h5.2v14.8h-5.2zM652.42 0h5.2v14.8h-5.2zM660.68 0h5.2v14.8h-5.2zM668.94 0h5.2v14.8h-5.2zM677.19 0h5.2v14.8h-5.2zM685.45 0h5.2v14.8h-5.2zM693.70 0h5.2v14.8h-5.2zM701.96 0h5.2v14.8h-5.2zM710.22 0h5.2v14.8h-5.2zM718.47 0h5.2v14.8h-5.2zM726.73 0h5.2v14.8h-5.2zM734.98 0h5.2v14.8h-5.2zM743.24 0h5.2v14.8h-5.2zM751.50 0h5.2v14.8h-5.2zM759.75 0h5.2v14.8h-5.2zM768.01 0h5.2v14.8h-5.2z"/><path id="kw" fill="#ebebeb" d="M1.80 1.3h2.2v11.5h-2.2zM10.06 1.3h2.2v11.5h-2.2zM18.31 1.3h2.2v11.5h-2.2zM26.57 1.3h2.2v11.5h-2.2zM34.82 1.3h2.2v11.5h-2.2zM43.08 1.3h2.2v11.5h-2.2zM51.34 1.3h2.2v11.5h-2.2zM59.59 1.3h2.2v11.5h-2.2zM67.85 1.3h2.2v11.5h-2.2zM76.10 1.3h2.2v11.5h-2.2zM84.36 1.3h2.2v11.5h-2.2zM92.62 1.3h2.2v11.5h-2.2zM100.87 1.3h2.2v11.5h-2.2zM109.13 1.3h2.2v11.5h-2.2zM117.38 1.3h2.2v11.5h-2.2zM125.64 1.3h2.2v11.5h-2.2zM133.90 1.3h2.2v11.5h-2.2zM142.15 1.3h2.2v11.5h-2.2zM150.41 1.3h2.2v11.5h-2.2zM158.66 1.3h2.2v11.5h-2.2zM166.92 1.3h2.2v11.5h-2.2zM175.18 1.3h2.2v11.5h-2.2zM183.43 1.3h2.2v11.5h-2.2zM191.69 1.3h2.2v11.5h-2.2zM199.94 1.3h2.2v11.5h-2.2zM208.20 1.3h2.2v11.5h-2.2zM216.46 1.3h2.2v11.5h-2.2zM224.71 1.3h2.2v11.5h-2.2zM232.97 1.3h2.2v11.5h-2.2zM241.22 1.3h2.2v11.5h-2.2zM249.48 1.3h2.2v11.5h-2.2zM257.74 1.3h2.2v11.5h-2.2zM265.99 1.3h2.2v11.5h-2.2zM274.25 1.3h2.2v11.5h-2.2zM282.50 1.3h2.2v11.5h-2.2zM290.76 1.3h2.2v11.5h-2.2zM299.02 1.3h2.2v11.5h-2.2zM307.27 1.3h2.2v11.5h-2.2zM315.53 1.3h2.2v11.5h-2.2zM323.78 1.3h2.2v11.5h-2.2zM332.04 1.3h2.2v11.5h-2.2zM340.30 1.3h2.2v11.5h-2.2zM348.55 1.3h2.2v11.5h-2.2zM356.81 1.3h2.2v11.5h-2.2zM365.06 1.3h2.2v11.5h-2.2zM373.32 1.3h2.2v11.5h-2.2zM381.58 1.3h2.2v11.5h-2.2zM389.83 1.3h2.2v11.5h-2.2zM398.09 1.3h2.2v11.5h-2.2zM406.34 1.3h2.2v11.5h-2.2zM414.60 1.3h2.2v11.5h-2.2zM422.86 1.3h2.2v11.5h-2.2zM431.11 1.3h2.2v11.5h-2.2zM439.37 1.3h2.2v11.5h-2.2zM447.62 1.3h2.2v11.5h-2.2zM455.88 1.3h2.2v11.5h-2.2zM464.14 1.3h2.2v11.5h-2.2zM472.39 1.3h2.2v11.5h-2.2zM480.65 1.3h2.2v11.5h-2.2zM488.90 1.3h2.2v11.5h-2.2zM497.16 1.3h2.2v11.5h-2.2zM505.42 1.3h2.2v11.5h-2.2zM513.67 1.3h2.2v11.5h-2.2zM521.93 1.3h2.2v11.5h-2.2zM530.18 1.3h2.2v11.5h-2.2zM538.44 1.3h2.2v11.5h-2.2zM546.70 1.3h2.2v11.5h-2.2zM554.95 1.3h2.2v11.5h-2.2zM563.21 1.3h2.2v11.5h-2.2zM571.46 1.3h2.2v11.5h-2.2zM579.72 1.3h2.2v11.5h-2.2zM587.98 1.3h2.2v11.5h-2.2zM596.23 1.3h2.2v11.5h-2.2zM604.49 1.3h2.2v11.5h-2.2zM612.74 1.3h2.2v11.5h-2.2zM621.00 1.3h2.2v11.5h-2.2zM629.26 1.3h2.2v11.5h-2.2zM637.51 1.3h2.2v11.5h-2.2zM645.77 1.3h2.2v11.5h-2.2zM654.02 1.3h2.2v11.5h-2.2zM662.28 1.3h2.2v11.5h-2.2zM670.54 1.3h2.2v11.5h-2.2zM678.79 1.3h2.2v11.5h-2.2zM687.05 1.3h2.2v11.5h-2.2zM695.30 1.3h2.2v11.5h-2.2zM703.56 1.3h2.2v11.5h-2.2zM711.82 1.3h2.2v11.5h-2.2zM720.07 1.3h2.2v11.5h-2.2zM728.33 1.3h2.2v11.5h-2.2zM736.58 1.3h2.2v11.5h-2.2zM744.84 1.3h2.2v11.5h-2.2zM753.10 1.3h2.2v11.5h-2.2zM761.35 1.3h2.2v11.5h-2.2zM769.61 1.3h2.2v11.5h-2.2z"/></defs>
<rect x="0" y="0" width="771" height="457" fill="#d4d4d4"/>
<rect x="0" y="146.71" width="771" height="32.33" fill="#c6c6c6"/>
<rect x="0" y="32.56" width="771" height="1" fill="#858585"/><rect x="0" y="48.72" width="771" height="1" fill="#858585"/><rect x="0" y="64.89" width="771" height="1" fill="#858585"/><rect x="0" y="81.06" width="771" height="1" fill="#858585"/><rect x="0" y="97.22" width="771" height="1" fill="#858585"/><rect x="0" y="113.38" width="771" height="1" fill="#858585"/><rect x="0" y="129.55" width="771" height="1" fill="#858585"/><rect x="0" y="145.71" width="771" height="1" fill="#858585"/><rect x="0" y="161.88" width="771" height="1" fill="#a0a0a0"/><rect x="0" y="178.05" width="771" height="1" fill="#858585"/><rect x="0" y="194.21" width="771" height="1" fill="#858585"/><rect x="0" y="210.38" width="771" height="1" fill="#858585"/><rect x="0" y="226.54" width="771" height="1" fill="#858585"/><rect x="0" y="242.70" width="771" height="1" fill="#858585"/><rect x="0" y="258.87" width="771" height="1" fill="#858585"/><rect x="0" y="275.04" width="771" height="1" fill="#858585"/><rect x="0" y="291.20" width="771" height="1" fill="#858585"/><rect x="0" y="307.37" width="771" height="1" fill="#858585"/><rect x="0" y="323.53" width="771" height="1" fill="#858585"/><rect x="0" y="339.69" width="771" height="1" fill="#858585"/><rect x="0" y="355.86" width="771" height="1" fill="#858585"/><rect x="0" y="372.02" width="771" height="1" fill="#858585"/><rect x="0" y="388.19" width="771" height="1" fill="#858585"/><rect x="0" y="404.36" width="771" height="1" fill="#858585"/><rect x="0" y="420.52" width="771" height="1" fill="#858585"/><rect x="0" y="436.68" width="771" height="1" fill="#858585"/><rect x="0" y="452.85" width="771" height="1" fill="#858585"/>
<rect x="0" y="15.80" width="771" height="2.2" fill="#3e3e3e"/>
<use href="#kb" fill="#060606" y="1.58"/><use href="#kw" y="1.58"/><use href="#kb" fill="#060606" y="17.75"/><use href="#kw" y="17.75"/><use href="#kb" fill="#060606" y="33.91"/><use href="#kw" y="33.91"/><use href="#kb" fill="#060606" y="50.07"/><use href="#kw" y="50.07"/><use href="#kb" fill="#060606" y="66.24"/><use href="#kw" y="66.24"/><use href="#kb" fill="#060606" y="82.41"/><use href="#kw" y="82.41"/><use href="#kb" fill="#060606" y="98.57"/><use href="#kw" y="98.57"/><use href="#kb" fill="#060606" y="114.73"/><use href="#kw" y="114.73"/><use href="#kb" fill="#060606" y="130.90"/><use href="#kw" y="130.90"/><use href="#kg" fill="#505050" y="146.96"/><use href="#kg" fill="#505050" y="163.13"/><use href="#kb" fill="#060606" y="179.40"/><use href="#kw" y="179.40"/><use href="#kb" fill="#060606" y="195.56"/><use href="#kw" y="195.56"/><use href="#kb" fill="#060606" y="211.72"/><use href="#kw" y="211.72"/><use href="#kb" fill="#060606" y="227.89"/><use href="#kw" y="227.89"/><use href="#kb" fill="#060606" y="244.05"/><use href="#kw" y="244.05"/><use href="#kb" fill="#060606" y="260.22"/><use href="#kw" y="260.22"/><use href="#kb" fill="#060606" y="276.39"/><use href="#kw" y="276.39"/><use href="#kb" fill="#060606" y="292.55"/><use href="#kw" y="292.55"/><use href="#kb" fill="#060606" y="308.72"/><use href="#kw" y="308.72"/><use href="#kb" fill="#060606" y="324.88"/><use href="#kw" y="324.88"/><use href="#kb" fill="#060606" y="341.05"/><use href="#kw" y="341.05"/><use href="#kb" fill="#060606" y="357.21"/><use href="#kw" y="357.21"/><use href="#kb" fill="#060606" y="373.38"/><use href="#kw" y="373.38"/><use href="#kb" fill="#060606" y="389.54"/><use href="#kw" y="389.54"/><use href="#kb" fill="#060606" y="405.71"/><use href="#kw" y="405.71"/><use href="#kb" fill="#060606" y="421.87"/><use href="#kw" y="421.87"/><use href="#kb" fill="#060606" y="438.03"/><use href="#kw" y="438.03"/><use href="#kb" fill="#060606" y="454.20"/><use href="#kw" y="454.20"/>
</svg><div style="left:263.2px;top:52.5px;width:9.4px;height:12.2px;background:#bcd8f6;"></div><div style="left:263.3px;top:52px;width:1px;height:500px;background:#b0d2f4;"></div><div style="left:991px;top:50px;width:13px;height:502px;background:#bdbdbd;"></div><svg style="position:absolute;left:993px;top:51px" width="10" height="8" viewBox="0 0 10 8"><path d="M1 4.8L4.3 2L7.6 4.8" fill="none" stroke="#5a5a5a" stroke-width="1.1"/></svg><svg style="position:absolute;left:993px;top:546px" width="10" height="8" viewBox="0 0 10 8"><path d="M1 1.5L4.3 4.3L7.6 1.5" fill="none" stroke="#5a5a5a" stroke-width="1.1"/></svg><div style="left:995.5px;top:61px;width:3.5px;height:442px;background:#a6a6a6;border-radius:2px"></div><div style="left:0px;top:552px;width:1005px;height:20px;background:#bfbfbf;"></div><div style="left:0px;top:552px;width:1005px;height:1px;background:#b2b2b2;"></div><div class="t" style="left:6.8px;top:556.59px;font-size:10.7px;color:#141414;">Current Frame</div><div class="t" style="left:82.5px;top:556.59px;font-size:10.7px;color:#141414;">5</div><div class="t" style="left:94.5px;top:556.59px;font-size:10.7px;color:#141414;">Preview</div><div class="t" style="left:138.5px;top:556.59px;font-size:10.7px;color:#141414;letter-spacing:0.3px">0-->99</div><div style="left:0px;top:0px;width:1px;height:572px;background:#5c5c5c;"></div><div style="left:1004px;top:26px;width:1px;height:546px;background:#6a6a6a;"></div><div style="left:0px;top:571px;width:1005px;height:1px;background:#5c5c5c;"></div>
</body></html>
